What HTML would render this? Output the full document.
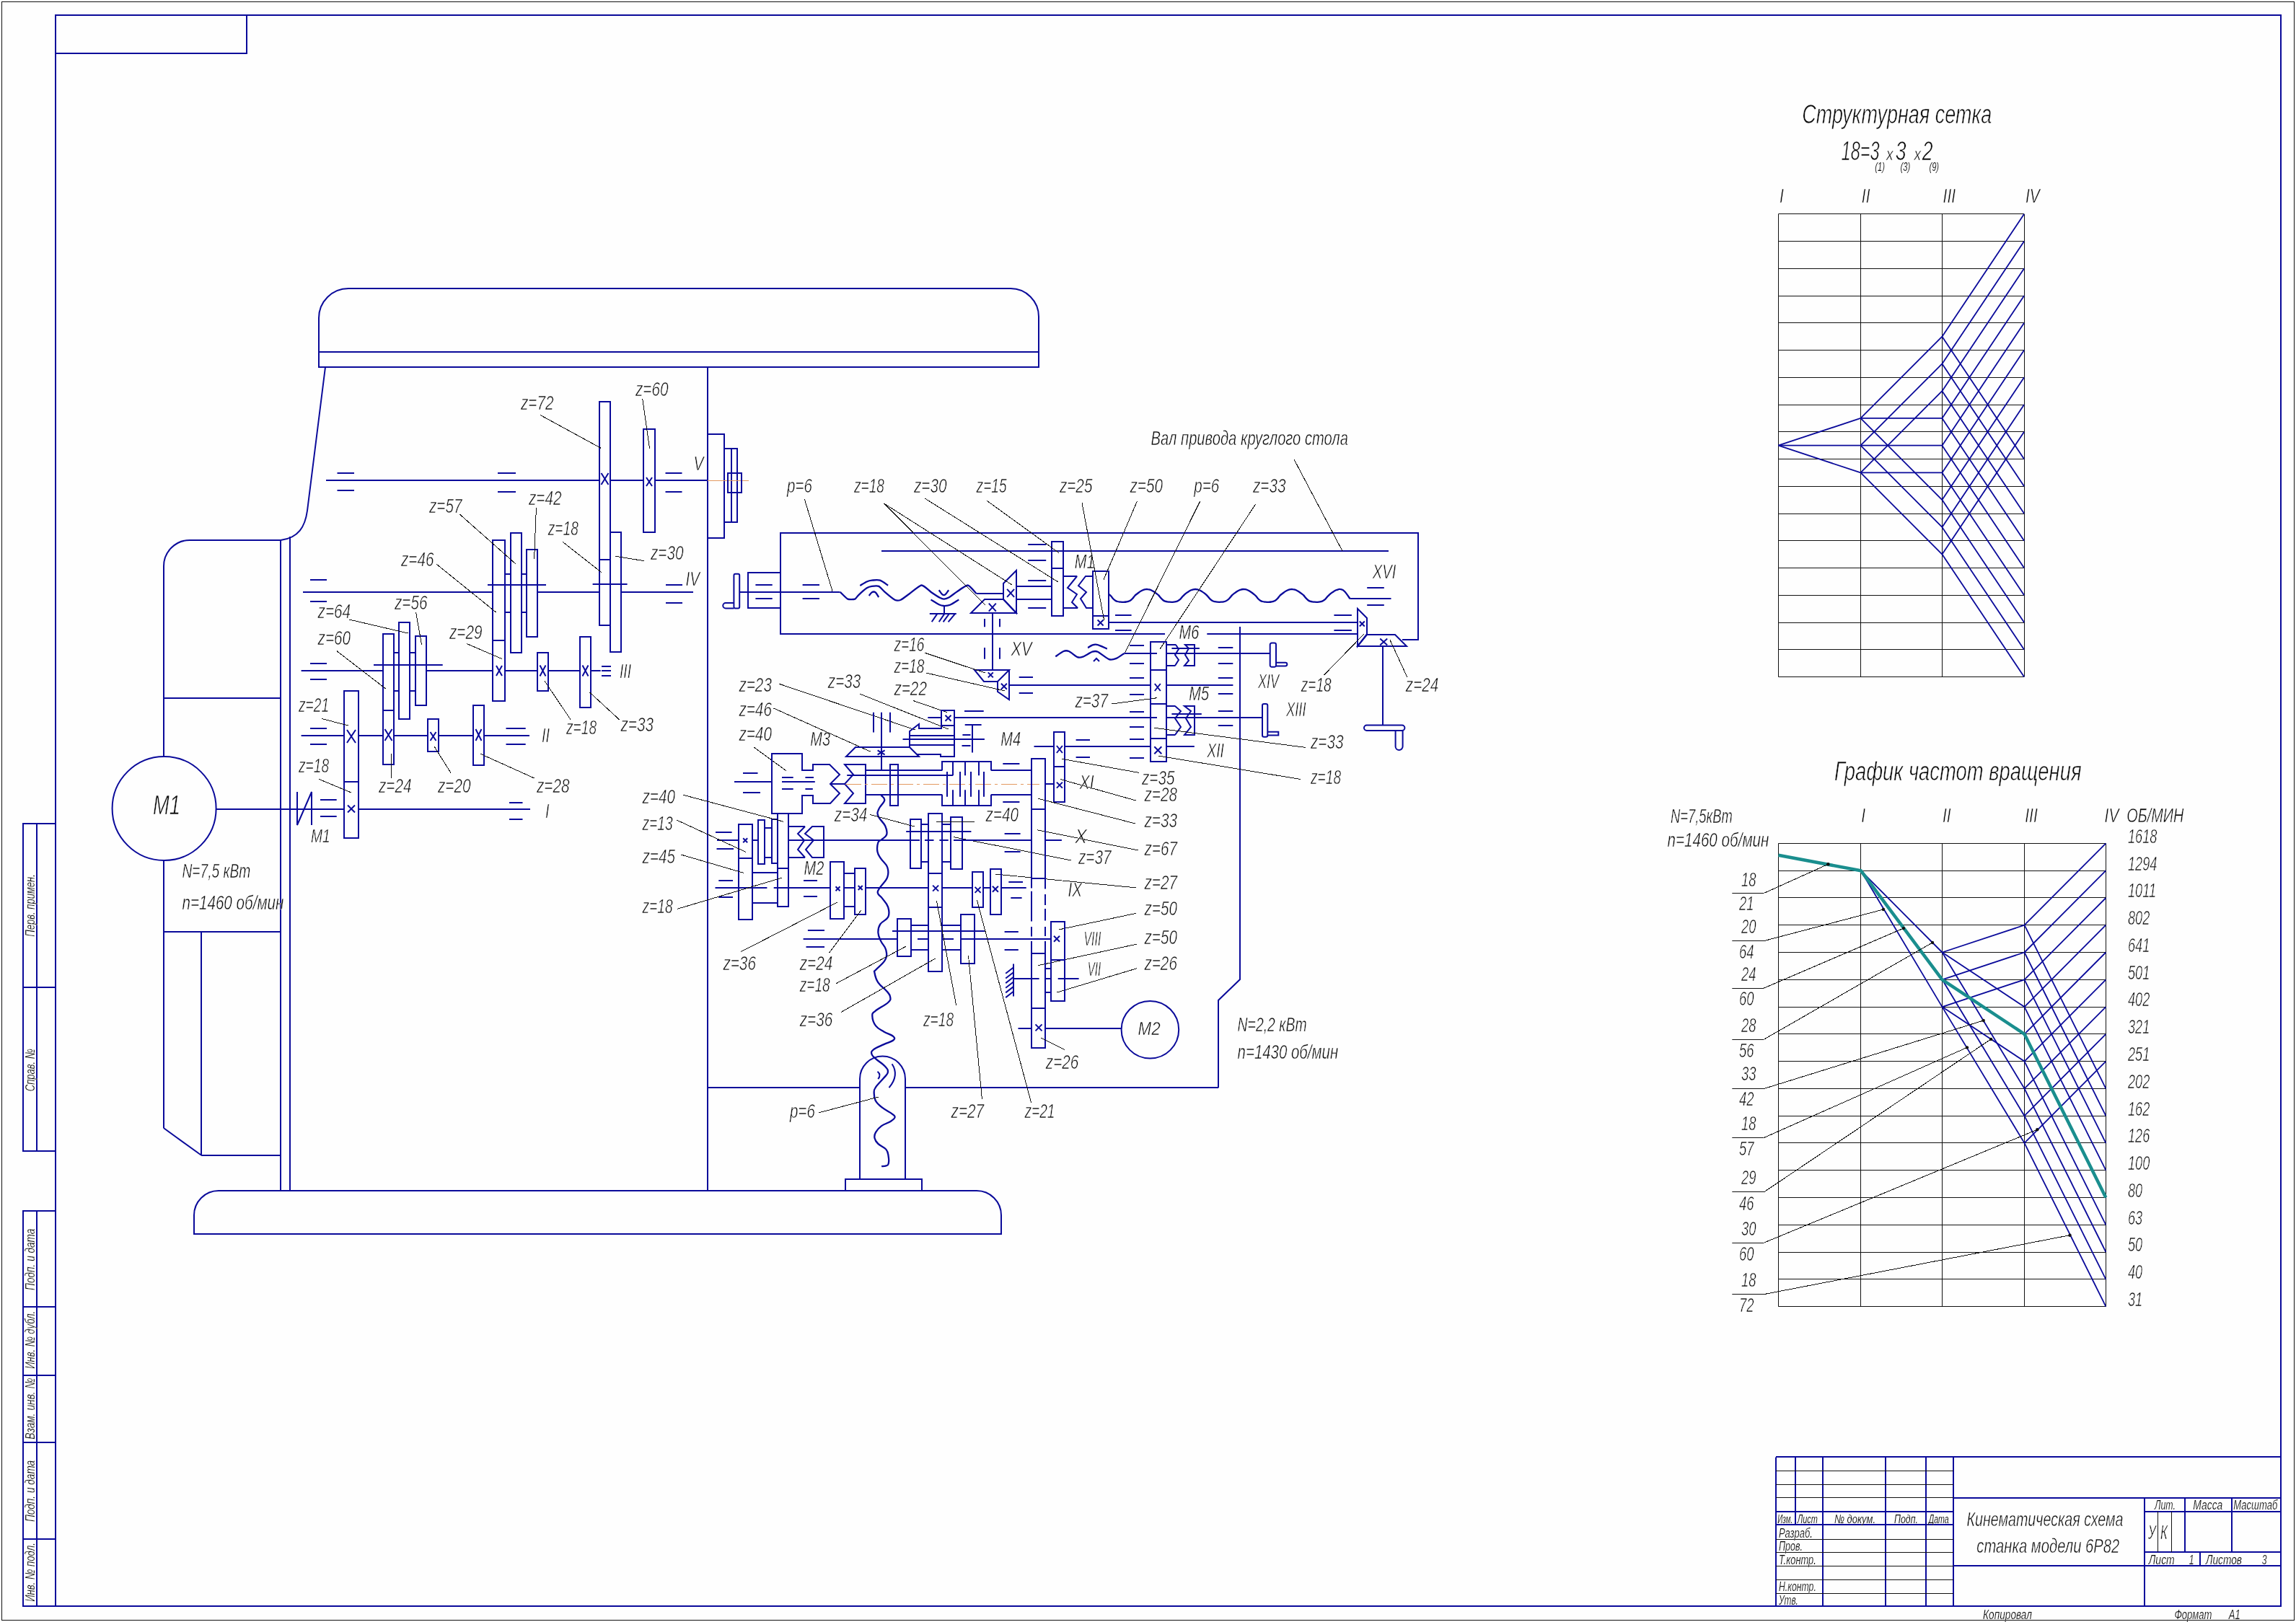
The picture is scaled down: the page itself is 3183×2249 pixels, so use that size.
<!DOCTYPE html>
<html lang="ru"><head><meta charset="utf-8"><title>Кинематическая схема станка модели 6Р82</title>
<style>
html,body{margin:0;padding:0;background:#fefefe;}
svg{display:block;will-change:transform;}
svg path,svg rect,svg circle{fill:none;stroke-linecap:butt;}
svg text{font-family:"Liberation Sans",sans-serif;font-style:italic;stroke:#fefefe;paint-order:fill stroke;}
</style></head><body>
<svg width="3183" height="2249" viewBox="0 0 3183 2249">
<rect x="0" y="0" width="3183" height="2249" style="fill:#fefefe;stroke:none"/>
<rect x="2.5" y="2.5" width="3178" height="2244" stroke="#111" stroke-width="1"/>
<rect x="77" y="21" width="3085" height="2206" stroke="#0a0a9a" stroke-width="2"/>
<rect x="77" y="21" width="265" height="53" stroke="#0a0a9a" stroke-width="2"/>
<path d="M77 1142L32 1142L32 1596L77 1596" stroke="#0a0a9a" stroke-width="2"/>
<path d="M51 1142.5L51 1596.5" stroke="#0a0a9a" stroke-width="2"/>
<path d="M32 1369L77 1369" stroke="#0a0a9a" stroke-width="2"/>
<path d="M77 1679L32 1679L32 2227L77 2227" stroke="#0a0a9a" stroke-width="2"/>
<path d="M51 1679.2L51 2227" stroke="#0a0a9a" stroke-width="2"/>
<path d="M32 1812L77 1812" stroke="#0a0a9a" stroke-width="2"/>
<path d="M32 1907L77 1907" stroke="#0a0a9a" stroke-width="2"/>
<path d="M32 2000L77 2000" stroke="#0a0a9a" stroke-width="2"/>
<path d="M32 2134L77 2134" stroke="#0a0a9a" stroke-width="2"/>
<text transform="translate(48 1298.7) rotate(-90) scale(0.66 1)" font-size="19" textLength="131.1" lengthAdjust="spacingAndGlyphs" fill="#0c0c0c" stroke-width="0.2">Перв. примен.</text>
<text transform="translate(48 1513.2) rotate(-90) scale(0.66 1)" font-size="19" textLength="89.4" lengthAdjust="spacingAndGlyphs" fill="#0c0c0c" stroke-width="0.2">Справ. №</text>
<text transform="translate(48 1788.9) rotate(-90) scale(0.66 1)" font-size="19" textLength="129.2" lengthAdjust="spacingAndGlyphs" fill="#0c0c0c" stroke-width="0.2">Подп. и дата</text>
<text transform="translate(48 1897.7) rotate(-90) scale(0.66 1)" font-size="19" textLength="120.9" lengthAdjust="spacingAndGlyphs" fill="#0c0c0c" stroke-width="0.2">Инв. № дубл.</text>
<text transform="translate(48 1995.8) rotate(-90) scale(0.66 1)" font-size="19" textLength="129.2" lengthAdjust="spacingAndGlyphs" fill="#0c0c0c" stroke-width="0.2">Взам. инв. №</text>
<text transform="translate(48 2110.1) rotate(-90) scale(0.66 1)" font-size="19" textLength="129.2" lengthAdjust="spacingAndGlyphs" fill="#0c0c0c" stroke-width="0.2">Подп. и дата</text>
<text transform="translate(48 2220.8) rotate(-90) scale(0.66 1)" font-size="19" textLength="123.8" lengthAdjust="spacingAndGlyphs" fill="#0c0c0c" stroke-width="0.2">Инв. № подл.</text>
<path d="M2462 2020L3162 2020" stroke="#0a0a9a" stroke-width="2"/>
<path d="M2462 2020.5L2462 2227" stroke="#0a0a9a" stroke-width="2"/>
<path d="M2527 2020.5L2527 2227" stroke="#0a0a9a" stroke-width="2"/>
<path d="M2614 2020.5L2614 2227" stroke="#0a0a9a" stroke-width="2"/>
<path d="M2670 2020.5L2670 2227" stroke="#0a0a9a" stroke-width="2"/>
<path d="M2708 2020.5L2708 2227" stroke="#0a0a9a" stroke-width="2"/>
<path d="M2489 2020.5L2489 2114.5" stroke="#0a0a9a" stroke-width="2"/>
<path d="M2462 2039.5L2708 2039.5" stroke="#111" stroke-width="1"/>
<path d="M2462 2058.5L2708 2058.5" stroke="#111" stroke-width="1"/>
<path d="M2462 2076.5L2708 2076.5" stroke="#111" stroke-width="1"/>
<path d="M2462 2134.5L2708 2134.5" stroke="#111" stroke-width="1"/>
<path d="M2462 2152.5L2708 2152.5" stroke="#111" stroke-width="1"/>
<path d="M2462 2171.5L2708 2171.5" stroke="#111" stroke-width="1"/>
<path d="M2462 2190.5L2708 2190.5" stroke="#111" stroke-width="1"/>
<path d="M2462 2209.5L2708 2209.5" stroke="#111" stroke-width="1"/>
<path d="M2462 2096L2708 2096" stroke="#0a0a9a" stroke-width="2"/>
<path d="M2462 2114L2708 2114" stroke="#0a0a9a" stroke-width="2"/>
<path d="M2708 2077L3162 2077" stroke="#0a0a9a" stroke-width="2"/>
<path d="M2708 2171L3162 2171" stroke="#0a0a9a" stroke-width="2"/>
<path d="M2973 2076.9L2973 2227" stroke="#0a0a9a" stroke-width="2"/>
<path d="M2973 2096L3162 2096" stroke="#0a0a9a" stroke-width="2"/>
<path d="M2973 2152L3162 2152" stroke="#0a0a9a" stroke-width="2"/>
<path d="M3029 2076.9L3029 2152.1" stroke="#0a0a9a" stroke-width="2"/>
<path d="M3094 2076.9L3094 2152.1" stroke="#0a0a9a" stroke-width="2"/>
<path d="M2991.5 2095.7L2991.5 2152.1" stroke="#111" stroke-width="1"/>
<path d="M3010.5 2095.7L3010.5 2152.1" stroke="#111" stroke-width="1"/>
<path d="M3050 2152.1L3050 2170.9" stroke="#0a0a9a" stroke-width="2"/>
<text transform="translate(2726.4 2116) scale(0.72 1)" font-size="27" textLength="301.4" lengthAdjust="spacingAndGlyphs" fill="#0c0c0c" stroke-width="0.5">Кинематическая схема</text>
<text transform="translate(2740.3 2153.3) scale(0.72 1)" font-size="27" textLength="275" lengthAdjust="spacingAndGlyphs" fill="#0c0c0c" stroke-width="0.5">станка модели 6Р82</text>
<text transform="translate(2464.3 2111.8) scale(0.62 1)" font-size="17" textLength="33.9" lengthAdjust="spacingAndGlyphs" fill="#0c0c0c" stroke-width="0.1">Изм.</text>
<text transform="translate(2491.8 2111.8) scale(0.62 1)" font-size="17" textLength="45.2" lengthAdjust="spacingAndGlyphs" fill="#0c0c0c" stroke-width="0.1">Лист</text>
<text transform="translate(2543 2111.8) scale(0.62 1)" font-size="17" textLength="91.9" lengthAdjust="spacingAndGlyphs" fill="#0c0c0c" stroke-width="0.1">№ докум.</text>
<text transform="translate(2626 2111.8) scale(0.62 1)" font-size="17" textLength="53.2" lengthAdjust="spacingAndGlyphs" fill="#0c0c0c" stroke-width="0.1">Подп.</text>
<text transform="translate(2673.7 2111.8) scale(0.62 1)" font-size="17" textLength="45.2" lengthAdjust="spacingAndGlyphs" fill="#0c0c0c" stroke-width="0.1">Дата</text>
<text transform="translate(2465.9 2131.6) scale(0.64 1)" font-size="19" textLength="73.4" lengthAdjust="spacingAndGlyphs" fill="#0c0c0c" stroke-width="0.2">Разраб.</text>
<text transform="translate(2465.9 2150) scale(0.64 1)" font-size="19" textLength="51.6" lengthAdjust="spacingAndGlyphs" fill="#0c0c0c" stroke-width="0.2">Пров.</text>
<text transform="translate(2465.9 2168.8) scale(0.64 1)" font-size="19" textLength="81.2" lengthAdjust="spacingAndGlyphs" fill="#0c0c0c" stroke-width="0.2">Т.контр.</text>
<text transform="translate(2465.9 2206) scale(0.64 1)" font-size="19" textLength="81.2" lengthAdjust="spacingAndGlyphs" fill="#0c0c0c" stroke-width="0.2">Н.контр.</text>
<text transform="translate(2465.9 2224.5) scale(0.64 1)" font-size="19" textLength="42.2" lengthAdjust="spacingAndGlyphs" fill="#0c0c0c" stroke-width="0.2">Утв.</text>
<text transform="translate(2987 2093.4) scale(0.64 1)" font-size="19" textLength="45.3" lengthAdjust="spacingAndGlyphs" fill="#0c0c0c" stroke-width="0.2">Лит.</text>
<text transform="translate(3040.3 2093.4) scale(0.64 1)" font-size="19" textLength="64.1" lengthAdjust="spacingAndGlyphs" fill="#0c0c0c" stroke-width="0.2">Масса</text>
<text transform="translate(3096.3 2093.4) scale(0.64 1)" font-size="19" textLength="95.3" lengthAdjust="spacingAndGlyphs" fill="#0c0c0c" stroke-width="0.2">Масштаб</text>
<text transform="translate(2977.9 2133.9) scale(0.6 1)" font-size="28" fill="#0c0c0c" stroke-width="0.6">У</text>
<text transform="translate(2995 2133.9) scale(0.6 1)" font-size="28" fill="#0c0c0c" stroke-width="0.6">К</text>
<text transform="translate(2978.8 2168.8) scale(0.64 1)" font-size="19" textLength="56.2" lengthAdjust="spacingAndGlyphs" fill="#0c0c0c" stroke-width="0.2">Лист</text>
<text transform="translate(3034.8 2168.8) scale(0.64 1)" font-size="19" fill="#0c0c0c" stroke-width="0.2">1</text>
<text transform="translate(3058 2168.8) scale(0.64 1)" font-size="19" textLength="78.1" lengthAdjust="spacingAndGlyphs" fill="#0c0c0c" stroke-width="0.2">Листов</text>
<text transform="translate(3135.8 2168.8) scale(0.64 1)" font-size="19" fill="#0c0c0c" stroke-width="0.2">3</text>
<text transform="translate(2749 2244.5) scale(0.64 1)" font-size="19" textLength="106.2" lengthAdjust="spacingAndGlyphs" fill="#0c0c0c" stroke-width="0.2">Копировал</text>
<text transform="translate(3014.4 2244.5) scale(0.64 1)" font-size="19" textLength="81.2" lengthAdjust="spacingAndGlyphs" fill="#0c0c0c" stroke-width="0.2">Формат</text>
<text transform="translate(3089.8 2244.5) scale(0.64 1)" font-size="19" textLength="25" lengthAdjust="spacingAndGlyphs" fill="#0c0c0c" stroke-width="0.2">А1</text>
<path d="M442 509L442 441A41 41 0 0 1 483 400L1401 400A39 39 0 0 1 1440 439L1440 509Z" stroke="#0a0a9a" stroke-width="2"/>
<path d="M442 488L1440 488" stroke="#0a0a9a" stroke-width="2"/>
<path d="M451 509L426 708C423 730 414 746 389 749" stroke="#0a0a9a" stroke-width="2"/>
<path d="M389 749L263 749A36 36 0 0 0 227 785L227 1050" stroke="#0a0a9a" stroke-width="2"/>
<path d="M227 968L389 968" stroke="#0a0a9a" stroke-width="2"/>
<path d="M389 749.4L389 1650.7" stroke="#0a0a9a" stroke-width="2"/>
<path d="M402 744L402 1650.7" stroke="#0a0a9a" stroke-width="2"/>
<path d="M227 1192L227 1564" stroke="#0a0a9a" stroke-width="2"/>
<path d="M226.8 1292L389 1292" stroke="#0a0a9a" stroke-width="2"/>
<path d="M279 1292.2L279 1601.8" stroke="#0a0a9a" stroke-width="2"/>
<path d="M226.8 1564L279 1601.8" stroke="#0a0a9a" stroke-width="2"/>
<path d="M279 1602L389 1602" stroke="#0a0a9a" stroke-width="2"/>
<circle cx="227.6" cy="1121" r="72" stroke="#0a0a9a" stroke-width="2"/>
<text transform="translate(212 1128.6) scale(0.74 1)" font-size="37" fill="#0c0c0c" stroke-width="0.7">М1</text>
<text transform="translate(252.4 1217) scale(0.72 1)" font-size="27" textLength="131.9" lengthAdjust="spacingAndGlyphs" fill="#0c0c0c" stroke-width="0.5">N=7,5 кВт</text>
<text transform="translate(252.4 1260.8) scale(0.72 1)" font-size="27" textLength="195.8" lengthAdjust="spacingAndGlyphs" fill="#0c0c0c" stroke-width="0.5">n=1460 об/мин</text>
<path d="M981 509L981 1650.7" stroke="#0a0a9a" stroke-width="2"/>
<path d="M269 1711L269 1685A34 34 0 0 1 303 1651L1354 1651A34 34 0 0 1 1388 1685L1388 1711Z" stroke="#0a0a9a" stroke-width="2"/>
<path d="M981 1508L1192 1508" stroke="#0a0a9a" stroke-width="2"/>
<path d="M1255 1508L1689.3 1508" stroke="#0a0a9a" stroke-width="2"/>
<path d="M1689 1508L1689 1387L1719 1358L1719 869" stroke="#0a0a9a" stroke-width="2"/>
<path d="M1192 1635L1192 1496A31.5 31.5 0 0 1 1255 1496L1255 1635" stroke="#0a0a9a" stroke-width="2"/>
<rect x="1172" y="1635" width="106" height="16" stroke="#0a0a9a" stroke-width="2"/>
<rect x="981" y="602" width="23" height="144" stroke="#0a0a9a" stroke-width="2"/>
<rect x="1004" y="622" width="18" height="102" stroke="#0a0a9a" stroke-width="2"/>
<path d="M1014 622L1014 724" stroke="#0a0a9a" stroke-width="2"/>
<path d="M981 666.5L1038 666.5" stroke="#e39a60" stroke-width="1"/>
<rect x="1009" y="656" width="19" height="27" stroke="#0a0a9a" stroke-width="2"/>
<path d="M452 666L831 666" stroke="#0a0a9a" stroke-width="2"/>
<path d="M846 666L892 666" stroke="#0a0a9a" stroke-width="2"/>
<path d="M908 666L981 666" stroke="#0a0a9a" stroke-width="2"/>
<path d="M467.5 656L491 656" stroke="#0a0a9a" stroke-width="2"/>
<path d="M467.5 680L491 680" stroke="#0a0a9a" stroke-width="2"/>
<path d="M690 656L715 656" stroke="#0a0a9a" stroke-width="2"/>
<path d="M690 682L715 682" stroke="#0a0a9a" stroke-width="2"/>
<path d="M922.5 656L945.5 656" stroke="#0a0a9a" stroke-width="2"/>
<path d="M922.5 682L945.5 682" stroke="#0a0a9a" stroke-width="2"/>
<rect x="831" y="557" width="15" height="310" stroke="#0a0a9a" stroke-width="2"/>
<path d="M831 776L846 776" stroke="#0a0a9a" stroke-width="2"/>
<rect x="892" y="595" width="16" height="143" stroke="#0a0a9a" stroke-width="2"/>
<rect x="846" y="738" width="15" height="166" stroke="#0a0a9a" stroke-width="2"/>
<path d="M821.6 810L869.6 810" stroke="#0a0a9a" stroke-width="2"/>
<path d="M833.5 656L843.5 672M843.5 656L833.5 672" stroke="#0a0a9a" stroke-width="2"/>
<path d="M896 662L904 674M904 662L896 674" stroke="#0a0a9a" stroke-width="2"/>
<text transform="translate(961.6 652.4) scale(0.76 1)" font-size="28" textLength="18.4" lengthAdjust="spacingAndGlyphs" fill="#0c0c0c" stroke-width="0.6">V</text>
<path d="M420 821L683 821" stroke="#0a0a9a" stroke-width="2"/>
<path d="M745 821L831 821" stroke="#0a0a9a" stroke-width="2"/>
<path d="M861.3 821L961 821" stroke="#0a0a9a" stroke-width="2"/>
<path d="M430 804L453 804" stroke="#0a0a9a" stroke-width="2"/>
<path d="M430 834L453 834" stroke="#0a0a9a" stroke-width="2"/>
<path d="M923 811L946 811" stroke="#0a0a9a" stroke-width="2"/>
<path d="M923 836L946 836" stroke="#0a0a9a" stroke-width="2"/>
<text transform="translate(950.6 812.3) scale(0.76 1)" font-size="28" textLength="25.7" lengthAdjust="spacingAndGlyphs" fill="#0c0c0c" stroke-width="0.6">IV</text>
<rect x="683" y="749" width="17" height="223" stroke="#0a0a9a" stroke-width="2"/>
<path d="M683 888L700 888" stroke="#0a0a9a" stroke-width="2"/>
<rect x="708" y="739" width="15" height="166" stroke="#0a0a9a" stroke-width="2"/>
<rect x="730" y="762" width="15" height="121" stroke="#0a0a9a" stroke-width="2"/>
<path d="M700 796L708 796" stroke="#0a0a9a" stroke-width="2"/>
<path d="M723 796L730 796" stroke="#0a0a9a" stroke-width="2"/>
<path d="M700 849L708 849" stroke="#0a0a9a" stroke-width="2"/>
<path d="M723 849L730 849" stroke="#0a0a9a" stroke-width="2"/>
<path d="M676 811L757 811" stroke="#0a0a9a" stroke-width="2"/>
<path d="M417.6 930L530.8 930" stroke="#0a0a9a" stroke-width="2"/>
<path d="M591.3 930L683 930" stroke="#0a0a9a" stroke-width="2"/>
<path d="M700 930L744.8 930" stroke="#0a0a9a" stroke-width="2"/>
<path d="M760 930L803.9 930" stroke="#0a0a9a" stroke-width="2"/>
<path d="M818.9 930L832.7 930" stroke="#0a0a9a" stroke-width="2"/>
<path d="M430 920L453 920" stroke="#0a0a9a" stroke-width="2"/>
<path d="M430 942L453 942" stroke="#0a0a9a" stroke-width="2"/>
<path d="M834 924L847 924" stroke="#0a0a9a" stroke-width="2"/>
<path d="M834 930L847 930" stroke="#0a0a9a" stroke-width="2"/>
<path d="M834 937L847 937" stroke="#0a0a9a" stroke-width="2"/>
<text transform="translate(859 940) scale(0.76 1)" font-size="28" textLength="21.1" lengthAdjust="spacingAndGlyphs" fill="#0c0c0c" stroke-width="0.6">III</text>
<rect x="531" y="879" width="15" height="181" stroke="#0a0a9a" stroke-width="2"/>
<path d="M530.8 985L546.3 985" stroke="#0a0a9a" stroke-width="2"/>
<rect x="553" y="863" width="15" height="134" stroke="#0a0a9a" stroke-width="2"/>
<rect x="576" y="882" width="15" height="96" stroke="#0a0a9a" stroke-width="2"/>
<path d="M546.3 905L552.7 905" stroke="#0a0a9a" stroke-width="2"/>
<path d="M568.2 905L576 905" stroke="#0a0a9a" stroke-width="2"/>
<path d="M546.3 958L552.7 958" stroke="#0a0a9a" stroke-width="2"/>
<path d="M568.2 958L576 958" stroke="#0a0a9a" stroke-width="2"/>
<path d="M518 922L613.7 922" stroke="#0a0a9a" stroke-width="2"/>
<rect x="745" y="905" width="15" height="53" stroke="#0a0a9a" stroke-width="2"/>
<rect x="804" y="883" width="15" height="98" stroke="#0a0a9a" stroke-width="2"/>
<path d="M688 923L696 937M696 923L688 937" stroke="#0a0a9a" stroke-width="2"/>
<path d="M748.5 922.5L756.5 937.5M756.5 922.5L748.5 937.5" stroke="#0a0a9a" stroke-width="2"/>
<path d="M807.5 922.5L815.5 937.5M815.5 922.5L807.5 937.5" stroke="#0a0a9a" stroke-width="2"/>
<path d="M417.6 1020L476.7 1020" stroke="#0a0a9a" stroke-width="2"/>
<path d="M497.2 1020L530.8 1020" stroke="#0a0a9a" stroke-width="2"/>
<path d="M546.3 1020L593 1020" stroke="#0a0a9a" stroke-width="2"/>
<path d="M608 1020L656 1020" stroke="#0a0a9a" stroke-width="2"/>
<path d="M671.4 1020L734 1020" stroke="#0a0a9a" stroke-width="2"/>
<path d="M430 1010L453 1010" stroke="#0a0a9a" stroke-width="2"/>
<path d="M430 1032L453 1032" stroke="#0a0a9a" stroke-width="2"/>
<path d="M701.5 1010L728.7 1010" stroke="#0a0a9a" stroke-width="2"/>
<path d="M701.5 1032L728.7 1032" stroke="#0a0a9a" stroke-width="2"/>
<text transform="translate(751 1028.7) scale(0.76 1)" font-size="28" textLength="14.5" lengthAdjust="spacingAndGlyphs" fill="#0c0c0c" stroke-width="0.6">II</text>
<rect x="477" y="958" width="20" height="204" stroke="#0a0a9a" stroke-width="2"/>
<path d="M476.7 1084L497.2 1084" stroke="#0a0a9a" stroke-width="2"/>
<rect x="593" y="997" width="15" height="45" stroke="#0a0a9a" stroke-width="2"/>
<rect x="656" y="978" width="15" height="83" stroke="#0a0a9a" stroke-width="2"/>
<path d="M481 1012L493 1030M493 1012L481 1030" stroke="#0a0a9a" stroke-width="2"/>
<path d="M533.5 1011L543.5 1027M543.5 1011L533.5 1027" stroke="#0a0a9a" stroke-width="2"/>
<path d="M596.5 1015L604.5 1027M604.5 1015L596.5 1027" stroke="#0a0a9a" stroke-width="2"/>
<path d="M659.5 1011L667.5 1027M667.5 1011L659.5 1027" stroke="#0a0a9a" stroke-width="2"/>
<path d="M299.6 1122L476.7 1122" stroke="#0a0a9a" stroke-width="2"/>
<path d="M497.2 1122L735 1122" stroke="#0a0a9a" stroke-width="2"/>
<path d="M412 1098L412 1144L432 1098L432 1144" stroke="#0a0a9a" stroke-width="2"/>
<path d="M444 1109L466.7 1109" stroke="#0a0a9a" stroke-width="2"/>
<path d="M444 1132L466.7 1132" stroke="#0a0a9a" stroke-width="2"/>
<path d="M706 1113L724.5 1113" stroke="#0a0a9a" stroke-width="2"/>
<path d="M706 1136L724.5 1136" stroke="#0a0a9a" stroke-width="2"/>
<path d="M482 1116.5L492 1126.5M492 1116.5L482 1126.5" stroke="#0a0a9a" stroke-width="2"/>
<text transform="translate(756 1134) scale(0.76 1)" font-size="28" textLength="7.2" lengthAdjust="spacingAndGlyphs" fill="#0c0c0c" stroke-width="0.6">I</text>
<text transform="translate(431 1167.6) scale(0.74 1)" font-size="26" fill="#0c0c0c" stroke-width="0.5">М1</text>
<text transform="translate(722 568) scale(0.74 1)" font-size="28" textLength="61.5" lengthAdjust="spacingAndGlyphs" fill="#0c0c0c" stroke-width="0.6">z=72</text>
<path d="M749 575.5L833 621.3" stroke="#111" stroke-width="1" shape-rendering="crispEdges"/>
<text transform="translate(881 549) scale(0.74 1)" font-size="28" textLength="61.5" lengthAdjust="spacingAndGlyphs" fill="#0c0c0c" stroke-width="0.6">z=60</text>
<path d="M890.8 553.3L900.6 621.8" stroke="#111" stroke-width="1" shape-rendering="crispEdges"/>
<text transform="translate(733 700) scale(0.74 1)" font-size="28" textLength="61.5" lengthAdjust="spacingAndGlyphs" fill="#0c0c0c" stroke-width="0.6">z=42</text>
<path d="M743.4 704L740.6 775.5" stroke="#111" stroke-width="1" shape-rendering="crispEdges"/>
<text transform="translate(595 711) scale(0.74 1)" font-size="28" textLength="61.5" lengthAdjust="spacingAndGlyphs" fill="#0c0c0c" stroke-width="0.6">z=57</text>
<path d="M636.7 712.5L714.8 781.8" stroke="#111" stroke-width="1" shape-rendering="crispEdges"/>
<text transform="translate(759.8 741.6) scale(0.74 1)" font-size="28" textLength="56.8" lengthAdjust="spacingAndGlyphs" fill="#0c0c0c" stroke-width="0.6">z=18</text>
<path d="M780 751.3L834 793.8" stroke="#111" stroke-width="1" shape-rendering="crispEdges"/>
<text transform="translate(902 775.5) scale(0.74 1)" font-size="28" textLength="61.5" lengthAdjust="spacingAndGlyphs" fill="#0c0c0c" stroke-width="0.6">z=30</text>
<path d="M853.5 771.3L893 777.7" stroke="#111" stroke-width="1" shape-rendering="crispEdges"/>
<text transform="translate(556 785.4) scale(0.74 1)" font-size="28" textLength="61.5" lengthAdjust="spacingAndGlyphs" fill="#0c0c0c" stroke-width="0.6">z=46</text>
<path d="M605.4 782.4L687.7 849" stroke="#111" stroke-width="1" shape-rendering="crispEdges"/>
<text transform="translate(547 845) scale(0.74 1)" font-size="28" textLength="61.5" lengthAdjust="spacingAndGlyphs" fill="#0c0c0c" stroke-width="0.6">z=56</text>
<path d="M576.6 849L584.6 894" stroke="#111" stroke-width="1" shape-rendering="crispEdges"/>
<text transform="translate(440.6 856.7) scale(0.74 1)" font-size="28" textLength="61.5" lengthAdjust="spacingAndGlyphs" fill="#0c0c0c" stroke-width="0.6">z=64</text>
<path d="M484 859L565.5 878" stroke="#111" stroke-width="1" shape-rendering="crispEdges"/>
<text transform="translate(440.6 894) scale(0.74 1)" font-size="28" textLength="61.5" lengthAdjust="spacingAndGlyphs" fill="#0c0c0c" stroke-width="0.6">z=60</text>
<path d="M466.7 902.5L534.7 955" stroke="#111" stroke-width="1" shape-rendering="crispEdges"/>
<text transform="translate(623 886.4) scale(0.74 1)" font-size="28" textLength="61.5" lengthAdjust="spacingAndGlyphs" fill="#0c0c0c" stroke-width="0.6">z=29</text>
<path d="M647 892.5L696 913.6" stroke="#111" stroke-width="1" shape-rendering="crispEdges"/>
<text transform="translate(414 987) scale(0.74 1)" font-size="28" textLength="56.8" lengthAdjust="spacingAndGlyphs" fill="#0c0c0c" stroke-width="0.6">z=21</text>
<path d="M446 996.5L482.8 1006" stroke="#111" stroke-width="1" shape-rendering="crispEdges"/>
<text transform="translate(414 1071) scale(0.74 1)" font-size="28" textLength="56.8" lengthAdjust="spacingAndGlyphs" fill="#0c0c0c" stroke-width="0.6">z=18</text>
<path d="M442 1080.3L487 1099" stroke="#111" stroke-width="1" shape-rendering="crispEdges"/>
<text transform="translate(525 1098.6) scale(0.74 1)" font-size="28" textLength="61.5" lengthAdjust="spacingAndGlyphs" fill="#0c0c0c" stroke-width="0.6">z=24</text>
<path d="M542.5 1045.4L542.5 1078.6" stroke="#111" stroke-width="1" shape-rendering="crispEdges"/>
<text transform="translate(607 1098.6) scale(0.74 1)" font-size="28" textLength="61.5" lengthAdjust="spacingAndGlyphs" fill="#0c0c0c" stroke-width="0.6">z=20</text>
<path d="M602 1035L625.5 1072.5" stroke="#111" stroke-width="1" shape-rendering="crispEdges"/>
<text transform="translate(744 1098.6) scale(0.74 1)" font-size="28" textLength="61.5" lengthAdjust="spacingAndGlyphs" fill="#0c0c0c" stroke-width="0.6">z=28</text>
<path d="M666.3 1045.4L741.2 1079.2" stroke="#111" stroke-width="1" shape-rendering="crispEdges"/>
<text transform="translate(785 1017.6) scale(0.74 1)" font-size="28" textLength="56.8" lengthAdjust="spacingAndGlyphs" fill="#0c0c0c" stroke-width="0.6">z=18</text>
<path d="M754.5 943.6L791 997.6" stroke="#111" stroke-width="1" shape-rendering="crispEdges"/>
<text transform="translate(860.5 1014.3) scale(0.74 1)" font-size="28" textLength="61.5" lengthAdjust="spacingAndGlyphs" fill="#0c0c0c" stroke-width="0.6">z=33</text>
<path d="M817.5 960L859 998.2" stroke="#111" stroke-width="1" shape-rendering="crispEdges"/>
<path d="M1615 879L1082 879L1082 739L1966 739L1966 887L1944 887" stroke="#0a0a9a" stroke-width="2"/>
<path d="M1673.3 879L1881.9 879" stroke="#0a0a9a" stroke-width="2"/>
<path d="M1222 764L1925 764" stroke="#0a0a9a" stroke-width="2"/>
<path d="M1082 794L1037 794L1037 843L1082 843" stroke="#0a0a9a" stroke-width="2"/>
<path d="M1025.8 821L1164.5 821" stroke="#0a0a9a" stroke-width="2"/>
<path d="M1047.4 811L1070.7 811" stroke="#0a0a9a" stroke-width="2"/>
<path d="M1047.4 830L1070.7 830" stroke="#0a0a9a" stroke-width="2"/>
<path d="M1112.6 811L1136 811" stroke="#0a0a9a" stroke-width="2"/>
<path d="M1112.6 830L1136 830" stroke="#0a0a9a" stroke-width="2"/>
<path d="M1019.4 795.8h3.8a2 2 0 0 1 2 2v43.7a2 2 0 0 1 -2 2h-3.8a2 2 0 0 1 -2 -2v-43.7a2 2 0 0 1 2 -2z" stroke="#0a0a9a" stroke-width="2"/>
<path d="M1017.4 836H1006a3.7 3.7 0 0 0 0 7.5h11.4" stroke="#0a0a9a" stroke-width="2"/>
<path d="M1164.7 820.8C1165.8 821.8 1173.2 829.6 1175.3 830.6C1177.4 831.6 1183.8 831.1 1185.3 830.6C1186.8 830.1 1188.4 826.8 1190 825.3C1191.6 823.8 1199.8 816.5 1201.7 815.3C1203.6 814.1 1207.1 813.1 1208.8 812.9C1210.5 812.7 1216.4 812.1 1218.2 812.9C1220 813.7 1224.2 818.7 1226.4 820.6C1228.6 822.5 1238.3 830.6 1240.5 831.7C1242.7 832.8 1246.8 832.5 1248.8 831.7C1250.8 830.9 1257.6 825.5 1260.5 823.5C1263.4 821.5 1274.5 811.7 1277.6 811.5C1280.7 811.3 1288.6 819.5 1291.1 821.2C1293.6 822.9 1301.1 827.9 1302.9 828.8C1304.7 829.7 1307.5 830.7 1308.8 830.6C1310.1 830.5 1314 829.2 1315.8 828.2C1317.6 827.2 1323.8 822.3 1326.4 820.6C1329 818.9 1339 811.3 1341.7 811.5C1344.4 811.7 1352.2 821.8 1353.4 822.9" stroke="#0a0a9a" stroke-width="2.3"/>
<path d="M1353.4 823L1391.1 823" stroke="#0a0a9a" stroke-width="2"/>
<path d="M1192.3 812C1193.9 811.1 1199 807.7 1201.7 806.5C1204.5 805.3 1205.8 805 1208.8 804.7C1211.8 804.4 1216.3 803.5 1220 804.7C1223.7 805.9 1229.2 810.6 1231.1 811.8" stroke="#0a0a9a" stroke-width="2.3"/>
<path d="M1204.7 826.1C1205.4 825.3 1207.3 822 1208.8 821.2C1210.3 820.4 1211.9 820.1 1213.5 821.2C1215.1 822.3 1217.4 826.9 1218.2 828" stroke="#0a0a9a" stroke-width="2.3"/>
<path d="M1301.7 818.2C1302.5 819.2 1304.9 823.4 1306.4 824.4C1307.9 825.4 1309 825.4 1310.5 824.4C1312 823.4 1314.4 819.2 1315.2 818.2" stroke="#0a0a9a" stroke-width="2.3"/>
<path d="M1290.5 831.5C1292.4 832.6 1298.8 836.8 1301.7 838.2C1304.7 839.6 1305.7 839.9 1308.2 840C1310.8 840.1 1313.5 840.2 1317 838.8C1320.5 837.4 1327.2 832.7 1329.3 831.5" stroke="#0a0a9a" stroke-width="2.3"/>
<path d="M1309 840L1309 850.6" stroke="#0a0a9a" stroke-width="2"/>
<path d="M1288.8 851L1325.8 851" stroke="#0a0a9a" stroke-width="2"/>
<path d="M1299.3 851.1L1291.7 862.3" stroke="#0a0a9a" stroke-width="2"/>
<path d="M1309.3 851.1L1301.7 862.3" stroke="#0a0a9a" stroke-width="2"/>
<path d="M1315.8 851.1L1307.6 862.3" stroke="#0a0a9a" stroke-width="2"/>
<path d="M1324 851.1L1314.6 862.3" stroke="#0a0a9a" stroke-width="2"/>
<path d="M1391 809L1409 791L1409 850L1391 831Z" stroke="#0a0a9a" stroke-width="2"/>
<path d="M1396.1 816.8L1406.1 827.8M1406.1 816.8L1396.1 827.8" stroke="#0a0a9a" stroke-width="2"/>
<path d="M1346 850L1365 831L1391 831L1409 850Z" stroke="#0a0a9a" stroke-width="2"/>
<path d="M1370.8 836.6L1380.8 847.6M1380.8 836.6L1370.8 847.6" stroke="#0a0a9a" stroke-width="2"/>
<path d="M1376 849.9L1376 929" stroke="#0a0a9a" stroke-width="2"/>
<path d="M1365 858L1365 869.3" stroke="#0a0a9a" stroke-width="2"/>
<path d="M1365 897.9L1365 913.7" stroke="#0a0a9a" stroke-width="2"/>
<path d="M1386 858L1386 869.3" stroke="#0a0a9a" stroke-width="2"/>
<path d="M1386 897.9L1386 913.7" stroke="#0a0a9a" stroke-width="2"/>
<text transform="translate(1401.6 909) scale(0.76 1)" font-size="28" textLength="38.2" lengthAdjust="spacingAndGlyphs" fill="#0c0c0c" stroke-width="0.6">XV</text>
<path d="M1351 929L1399 929L1383 945L1364 945Z" stroke="#0a0a9a" stroke-width="2"/>
<path d="M1369.8 932.4L1376.8 939.4M1376.8 932.4L1369.8 939.4" stroke="#0a0a9a" stroke-width="2"/>
<path d="M1399 929L1399 970L1383 959L1383 945" stroke="#0a0a9a" stroke-width="2"/>
<path d="M1387.9 947.7L1395.9 955.7M1395.9 947.7L1387.9 955.7" stroke="#0a0a9a" stroke-width="2"/>
<path d="M1409.3 813L1458.5 813" stroke="#0a0a9a" stroke-width="2"/>
<path d="M1409.3 831L1458.5 831" stroke="#0a0a9a" stroke-width="2"/>
<path d="M1425.2 755L1450.2 755" stroke="#0a0a9a" stroke-width="2"/>
<path d="M1425.2 777L1450.2 777" stroke="#0a0a9a" stroke-width="2"/>
<path d="M1425.2 805L1450.2 805" stroke="#0a0a9a" stroke-width="2"/>
<path d="M1425.2 843L1450.2 843" stroke="#0a0a9a" stroke-width="2"/>
<rect x="1458" y="751" width="16" height="103" stroke="#0a0a9a" stroke-width="2"/>
<path d="M1458.5 788L1474.4 788" stroke="#0a0a9a" stroke-width="2"/>
<path d="M1474.4 799L1493.3 799" stroke="#0a0a9a" stroke-width="2"/>
<path d="M1474.4 843L1494.2 843" stroke="#0a0a9a" stroke-width="2"/>
<path d="M1493 799L1480 815L1493 824L1486 835L1494 843" stroke="#0a0a9a" stroke-width="2"/>
<path d="M1515 799L1505 799L1495 812L1506 821L1498 830L1506 843L1515 843" stroke="#0a0a9a" stroke-width="2"/>
<text transform="translate(1489.8 787.5) scale(0.74 1)" font-size="27" fill="#0c0c0c" stroke-width="0.5">М1</text>
<rect x="1515" y="792" width="22" height="80" stroke="#0a0a9a" stroke-width="2"/>
<path d="M1515 854L1537.2 854" stroke="#0a0a9a" stroke-width="2"/>
<path d="M1521.6 859.5L1529.6 867.5M1529.6 859.5L1521.6 867.5" stroke="#0a0a9a" stroke-width="2"/>
<path d="M1537.2 863L1881.9 863" stroke="#0a0a9a" stroke-width="2"/>
<path d="M1546 853L1568.6 853" stroke="#0a0a9a" stroke-width="2"/>
<path d="M1546 874L1568.6 874" stroke="#0a0a9a" stroke-width="2"/>
<path d="M1849.4 853L1873.9 853" stroke="#0a0a9a" stroke-width="2"/>
<path d="M1849.4 874L1873.9 874" stroke="#0a0a9a" stroke-width="2"/>
<path d="M1537.2 823.8C1537.8 824.3 1539 825.2 1540.2 826.5C1541.4 827.8 1542 829 1543.2 830.3C1544.4 831.5 1545 832 1546.2 832.7C1547.4 833.5 1548 833.6 1549.2 834C1550.4 834.3 1551 834.4 1552.2 834.6C1553.4 834.7 1554 834.7 1555.2 834.8C1556.4 834.8 1557 834.8 1558.2 834.8C1559.4 834.7 1560 834.7 1561.2 834.5C1562.4 834.3 1563 834.3 1564.2 833.9C1565.4 833.5 1566 833.3 1567.2 832.5C1568.4 831.7 1569 831.1 1570.2 829.8C1571.4 828.5 1572 827.2 1573.2 826C1574.4 824.7 1575 824.4 1576.2 823.5C1577.4 822.5 1578 822 1579.2 821.2C1580.4 820.3 1581 819.9 1582.2 819.3C1583.4 818.6 1584 818.3 1585.2 817.9C1586.4 817.5 1587 817.3 1588.2 817.1C1589.4 817 1590 816.9 1591.2 817.1C1592.4 817.2 1593 817.3 1594.2 817.7C1595.4 818.1 1596 818.3 1597.2 819C1598.4 819.6 1599 820 1600.2 820.8C1601.4 821.6 1602 822.1 1603.2 823C1604.4 823.9 1605 824.2 1606.2 825.4C1607.4 826.7 1608 827.8 1609.2 829.1C1610.4 830.5 1611 831.1 1612.2 832C1613.4 833 1614 833.2 1615.2 833.7C1616.4 834.1 1617 834.2 1618.2 834.4C1619.4 834.6 1620 834.7 1621.2 834.7C1622.4 834.8 1623 834.8 1624.2 834.8C1625.4 834.8 1626 834.8 1627.2 834.6C1628.4 834.5 1629 834.5 1630.2 834.1C1631.4 833.8 1632 833.7 1633.2 833C1634.4 832.4 1635 832 1636.2 830.9C1637.4 829.7 1638 828.7 1639.2 827.3C1640.4 826 1641 825.4 1642.2 824.3C1643.4 823.2 1644 822.8 1645.2 821.9C1646.4 821 1647 820.6 1648.2 819.9C1649.4 819.1 1650 818.8 1651.2 818.3C1652.4 817.8 1653 817.6 1654.2 817.3C1655.4 817 1656 817 1657.2 817C1658.4 817 1659 817.1 1660.2 817.4C1661.4 817.7 1662 817.9 1663.2 818.5C1664.4 819 1665 819.4 1666.2 820.1C1667.4 820.9 1668 821.3 1669.2 822.2C1670.4 823.1 1671 823.5 1672.2 824.6C1673.4 825.7 1674 826.5 1675.2 827.9C1676.4 829.2 1677 830.2 1678.2 831.2C1679.4 832.3 1680 832.6 1681.2 833.2C1682.4 833.8 1683 833.9 1684.2 834.2C1685.4 834.5 1686 834.6 1687.2 834.7C1688.4 834.8 1689 834.8 1690.2 834.8C1691.4 834.8 1692 834.8 1693.2 834.7C1694.4 834.6 1695 834.6 1696.2 834.3C1697.4 834.1 1698 834 1699.2 833.5C1700.4 833 1701 832.7 1702.2 831.7C1703.4 830.8 1704 830 1705.2 828.6C1706.4 827.3 1707 826.3 1708.2 825.1C1709.4 823.9 1710 823.6 1711.2 822.7C1712.4 821.8 1713 821.3 1714.2 820.5C1715.4 819.7 1716 819.3 1717.2 818.7C1718.4 818.2 1719 817.9 1720.2 817.6C1721.4 817.2 1722 817.1 1723.2 817C1724.4 817 1725 817 1726.2 817.2C1727.4 817.4 1728 817.6 1729.2 818C1730.4 818.5 1731 818.8 1732.2 819.5C1733.4 820.2 1734 820.6 1735.2 821.5C1736.4 822.3 1737 822.8 1738.2 823.8C1739.4 824.8 1740 825.2 1741.2 826.5C1742.4 827.8 1743 829 1744.2 830.3C1745.4 831.5 1746 832 1747.2 832.7C1748.4 833.5 1749 833.6 1750.2 834C1751.4 834.3 1752 834.4 1753.2 834.6C1754.4 834.7 1755 834.7 1756.2 834.8C1757.4 834.8 1758 834.8 1759.2 834.8C1760.4 834.7 1761 834.7 1762.2 834.5C1763.4 834.3 1764 834.3 1765.2 833.9C1766.4 833.5 1767 833.3 1768.2 832.5C1769.4 831.7 1770 831.1 1771.2 829.8C1772.4 828.5 1773 827.2 1774.2 826C1775.4 824.7 1776 824.4 1777.2 823.5C1778.4 822.5 1779 822 1780.2 821.2C1781.4 820.3 1782 819.9 1783.2 819.3C1784.4 818.6 1785 818.3 1786.2 817.9C1787.4 817.5 1788 817.3 1789.2 817.1C1790.4 817 1791 816.9 1792.2 817.1C1793.4 817.2 1794 817.3 1795.2 817.7C1796.4 818.1 1797 818.3 1798.2 819C1799.4 819.6 1800 820 1801.2 820.8C1802.4 821.6 1803 822.1 1804.2 823C1805.4 823.9 1806 824.2 1807.2 825.4C1808.4 826.7 1809 827.8 1810.2 829.1C1811.4 830.5 1812 831.1 1813.2 832C1814.4 833 1815 833.2 1816.2 833.7C1817.4 834.1 1818 834.2 1819.2 834.4C1820.4 834.6 1821 834.7 1822.2 834.7C1823.4 834.8 1824 834.8 1825.2 834.8C1826.4 834.8 1827 834.8 1828.2 834.6C1829.4 834.5 1830 834.5 1831.2 834.1C1832.4 833.8 1833 833.7 1834.2 833C1835.4 832.4 1836 832 1837.2 830.9C1838.4 829.7 1839 828.7 1840.2 827.3C1841.4 826 1842 825.4 1843.2 824.3C1844.4 823.2 1845 822.8 1846.2 821.9C1847.4 821 1848 820.6 1849.2 819.9C1850.4 819.1 1851 818.8 1852.2 818.3C1853.4 817.8 1854 817.6 1855.2 817.3C1856.4 817 1856.2 816.5 1858 817C1859.8 817.5 1861.3 817.3 1864 820C1866.7 822.7 1870.1 828.2 1871.6 830.3" stroke="#0a0a9a" stroke-width="2.3"/>
<path d="M1871.6 830L1928.5 830" stroke="#0a0a9a" stroke-width="2"/>
<path d="M1895.2 815L1918.8 815" stroke="#0a0a9a" stroke-width="2"/>
<path d="M1895.2 839L1918.8 839" stroke="#0a0a9a" stroke-width="2"/>
<text transform="translate(1902.7 802.2) scale(0.76 1)" font-size="28" textLength="43" lengthAdjust="spacingAndGlyphs" fill="#0c0c0c" stroke-width="0.6">XVI</text>
<path d="M1882 844L1895 857L1895 879L1882 896Z" stroke="#0a0a9a" stroke-width="2"/>
<path d="M1884.8 861.5L1891.8 868.5M1891.8 861.5L1884.8 868.5" stroke="#0a0a9a" stroke-width="2"/>
<path d="M1882 896L1895 880L1934 880L1950 896Z" stroke="#0a0a9a" stroke-width="2"/>
<path d="M1913.2 885.5L1923.2 894.5M1923.2 885.5L1913.2 894.5" stroke="#0a0a9a" stroke-width="2"/>
<path d="M1917 895.6L1917 1005.6" stroke="#0a0a9a" stroke-width="2"/>
<path d="M1894.7 1005.6h49a3.7 3.7 0 0 1 0 7.4h-49a3.7 3.7 0 0 1 0 -7.4z" stroke="#0a0a9a" stroke-width="2"/>
<path d="M1934.6 1013v22a5 5 0 0 0 10 0v-22" stroke="#0a0a9a" stroke-width="2"/>
<text transform="translate(1091 682.5) scale(0.74 1)" font-size="28" textLength="47.3" lengthAdjust="spacingAndGlyphs" fill="#0c0c0c" stroke-width="0.6">p=6</text>
<path d="M1115.4 692.3L1154.2 820.2" stroke="#111" stroke-width="1" shape-rendering="crispEdges"/>
<text transform="translate(1183.9 682.5) scale(0.74 1)" font-size="28" textLength="56.8" lengthAdjust="spacingAndGlyphs" fill="#0c0c0c" stroke-width="0.6">z=18</text>
<path d="M1225.5 698L1403 811" stroke="#111" stroke-width="1" shape-rendering="crispEdges"/>
<path d="M1225.5 698L1365.6 838.8" stroke="#111" stroke-width="1" shape-rendering="crispEdges"/>
<text transform="translate(1267 682.5) scale(0.74 1)" font-size="28" textLength="61.5" lengthAdjust="spacingAndGlyphs" fill="#0c0c0c" stroke-width="0.6">z=30</text>
<path d="M1282.4 691.2L1466.8 806.9" stroke="#111" stroke-width="1" shape-rendering="crispEdges"/>
<text transform="translate(1353.6 682.5) scale(0.74 1)" font-size="28" textLength="56.8" lengthAdjust="spacingAndGlyphs" fill="#0c0c0c" stroke-width="0.6">z=15</text>
<path d="M1367.8 694L1468.2 766.7" stroke="#111" stroke-width="1" shape-rendering="crispEdges"/>
<text transform="translate(1468.9 682.5) scale(0.74 1)" font-size="28" textLength="61.5" lengthAdjust="spacingAndGlyphs" fill="#0c0c0c" stroke-width="0.6">z=25</text>
<path d="M1500 697.3L1530.6 859.6" stroke="#111" stroke-width="1" shape-rendering="crispEdges"/>
<text transform="translate(1566.5 682.5) scale(0.74 1)" font-size="28" textLength="61.5" lengthAdjust="spacingAndGlyphs" fill="#0c0c0c" stroke-width="0.6">z=50</text>
<path d="M1576.4 695L1530 803.6" stroke="#111" stroke-width="1" shape-rendering="crispEdges"/>
<text transform="translate(1655.3 682.5) scale(0.74 1)" font-size="28" textLength="47.3" lengthAdjust="spacingAndGlyphs" fill="#0c0c0c" stroke-width="0.6">p=6</text>
<path d="M1663.7 695L1559.6 905" stroke="#111" stroke-width="1" shape-rendering="crispEdges"/>
<text transform="translate(1737 682.5) scale(0.74 1)" font-size="28" textLength="61.5" lengthAdjust="spacingAndGlyphs" fill="#0c0c0c" stroke-width="0.6">z=33</text>
<path d="M1740.7 699L1608 900" stroke="#111" stroke-width="1" shape-rendering="crispEdges"/>
<text transform="translate(1595.6 616.9) scale(0.72 1)" font-size="27" textLength="379.7" lengthAdjust="spacingAndGlyphs" fill="#0c0c0c" stroke-width="0.5">Вал привода круглого стола</text>
<path d="M1794 637L1861 764" stroke="#111" stroke-width="1" shape-rendering="crispEdges"/>
<text transform="translate(1803.7 958.6) scale(0.74 1)" font-size="28" textLength="56.8" lengthAdjust="spacingAndGlyphs" fill="#0c0c0c" stroke-width="0.6">z=18</text>
<path d="M1835.6 935.9L1891 879" stroke="#111" stroke-width="1" shape-rendering="crispEdges"/>
<text transform="translate(1948.8 958.6) scale(0.74 1)" font-size="28" textLength="61.5" lengthAdjust="spacingAndGlyphs" fill="#0c0c0c" stroke-width="0.6">z=24</text>
<path d="M1950.7 938.6L1927 887.3" stroke="#111" stroke-width="1" shape-rendering="crispEdges"/>
<text transform="translate(1239.4 902.6) scale(0.74 1)" font-size="28" textLength="56.8" lengthAdjust="spacingAndGlyphs" fill="#0c0c0c" stroke-width="0.6">z=16</text>
<path d="M1282.4 905.3L1365.6 933" stroke="#111" stroke-width="1" shape-rendering="crispEdges"/>
<text transform="translate(1239.4 933) scale(0.74 1)" font-size="28" textLength="56.8" lengthAdjust="spacingAndGlyphs" fill="#0c0c0c" stroke-width="0.6">z=18</text>
<path d="M1283.7 933L1393.3 958" stroke="#111" stroke-width="1" shape-rendering="crispEdges"/>
<text transform="translate(1239.4 963.6) scale(0.74 1)" font-size="28" textLength="61.5" lengthAdjust="spacingAndGlyphs" fill="#0c0c0c" stroke-width="0.6">z=22</text>
<path d="M1265.7 971.4L1312.9 987.7" stroke="#111" stroke-width="1" shape-rendering="crispEdges"/>
<text transform="translate(1024.4 958.6) scale(0.74 1)" font-size="28" textLength="61.5" lengthAdjust="spacingAndGlyphs" fill="#0c0c0c" stroke-width="0.6">z=23</text>
<path d="M1080.4 948.3L1269 1012" stroke="#111" stroke-width="1" shape-rendering="crispEdges"/>
<text transform="translate(1147.8 953.9) scale(0.74 1)" font-size="28" textLength="61.5" lengthAdjust="spacingAndGlyphs" fill="#0c0c0c" stroke-width="0.6">z=33</text>
<path d="M1192.2 962.2L1314.5 1010.9" stroke="#111" stroke-width="1" shape-rendering="crispEdges"/>
<text transform="translate(1024.4 993.3) scale(0.74 1)" font-size="28" textLength="61.5" lengthAdjust="spacingAndGlyphs" fill="#0c0c0c" stroke-width="0.6">z=46</text>
<path d="M1072.5 982L1206.5 1042" stroke="#111" stroke-width="1" shape-rendering="crispEdges"/>
<text transform="translate(1024.4 1026.6) scale(0.74 1)" font-size="28" textLength="61.5" lengthAdjust="spacingAndGlyphs" fill="#0c0c0c" stroke-width="0.6">z=40</text>
<path d="M1044.7 1035.8L1089.8 1068.6" stroke="#111" stroke-width="1" shape-rendering="crispEdges"/>
<text transform="translate(1490.4 981) scale(0.74 1)" font-size="28" textLength="61.5" lengthAdjust="spacingAndGlyphs" fill="#0c0c0c" stroke-width="0.6">z=37</text>
<path d="M1541.5 976L1604.5 967.6" stroke="#111" stroke-width="1" shape-rendering="crispEdges"/>
<path d="M1398.9 950L1595.4 950" stroke="#0a0a9a" stroke-width="2"/>
<path d="M1617 950L1709.4 950" stroke="#0a0a9a" stroke-width="2"/>
<path d="M1412.7 939L1432 939" stroke="#0a0a9a" stroke-width="2"/>
<path d="M1412.7 961L1432 961" stroke="#0a0a9a" stroke-width="2"/>
<path d="M1463.3 910.4C1464.6 909.5 1472.2 903.9 1474.4 903C1476.6 902.1 1479.5 902.1 1481.8 903C1484.1 903.9 1491.4 910.2 1493.7 911.1C1496 912 1498.7 911.6 1501.1 910.7C1503.5 909.8 1512 904.5 1514.4 903.7C1516.8 902.9 1519.1 902.5 1521.8 903.7C1524.5 904.9 1534.4 913 1537.4 914.1C1540.4 915.2 1545.2 913.9 1547.7 912.9C1550.2 911.9 1557.2 906.7 1558.5 905.9" stroke="#0a0a9a" stroke-width="2.3"/>
<path d="M1558.5 906L1604 906" stroke="#0a0a9a" stroke-width="2"/>
<path d="M1508.1 898.1C1510.3 897.2 1513.6 893.4 1518.9 893.7C1524.2 894 1531.6 898.4 1534.8 899.6" stroke="#0a0a9a" stroke-width="2.3"/>
<path d="M1516 917L1520 913L1524 917" stroke="#0a0a9a" stroke-width="2"/>
<rect x="1595" y="890" width="22" height="166" stroke="#0a0a9a" stroke-width="2"/>
<path d="M1595.4 929L1617 929" stroke="#0a0a9a" stroke-width="2"/>
<path d="M1595.4 976L1617 976" stroke="#0a0a9a" stroke-width="2"/>
<path d="M1595.4 1024L1617 1024" stroke="#0a0a9a" stroke-width="2"/>
<path d="M1600.8 948L1608.8 958M1608.8 948L1600.8 958" stroke="#0a0a9a" stroke-width="2"/>
<path d="M1600.3 1035.3L1610.3 1045.3M1610.3 1035.3L1600.3 1045.3" stroke="#0a0a9a" stroke-width="2"/>
<path d="M1617 906L1760.7 906" stroke="#0a0a9a" stroke-width="2"/>
<path d="M1617 894L1630.3 894" stroke="#0a0a9a" stroke-width="2"/>
<path d="M1617 923L1629.3 923" stroke="#0a0a9a" stroke-width="2"/>
<path d="M1630 894L1634 900L1629 908L1634 915L1629 923" stroke="#0a0a9a" stroke-width="2"/>
<path d="M1656 894L1643 894L1648 899L1643 908L1648 916L1642 923L1656 923Z" stroke="#0a0a9a" stroke-width="2"/>
<path d="M1624.4 899L1662.9 899" stroke="#0a0a9a" stroke-width="2"/>
<text transform="translate(1634.5 886) scale(0.74 1)" font-size="27" fill="#0c0c0c" stroke-width="0.5">М6</text>
<path d="M1617 979L1629.3 979" stroke="#0a0a9a" stroke-width="2"/>
<path d="M1617 1019L1629.3 1019" stroke="#0a0a9a" stroke-width="2"/>
<path d="M1629 979L1637 986L1629 996L1637 1008L1629 1019" stroke="#0a0a9a" stroke-width="2"/>
<path d="M1656 979L1642 979L1651 986L1644 996L1651 1008L1642 1019L1656 1019Z" stroke="#0a0a9a" stroke-width="2"/>
<path d="M1624.4 990L1665.8 990" stroke="#0a0a9a" stroke-width="2"/>
<text transform="translate(1648.3 970.5) scale(0.74 1)" font-size="27" fill="#0c0c0c" stroke-width="0.5">М5</text>
<path d="M1763 891.5h3.7a2.3 2.3 0 0 1 2.3 2.3v28.7a2.3 2.3 0 0 1 -2.3 2.3h-3.7a2.3 2.3 0 0 1 -2.3 -2.3v-28.7a2.3 2.3 0 0 1 2.3 -2.3z" stroke="#0a0a9a" stroke-width="2"/>
<path d="M1769 918.7h13a2.3 2.3 0 0 1 0 4.7h-13" stroke="#0a0a9a" stroke-width="2"/>
<path d="M1752.3 976h2.7a2.3 2.3 0 0 1 2.3 2.3v41.1a2.3 2.3 0 0 1 -2.3 2.3h-2.7a2.3 2.3 0 0 1 -2.3 -2.3v-41.1a2.3 2.3 0 0 1 2.3 -2.3z" stroke="#0a0a9a" stroke-width="2"/>
<path d="M1757 1014.8h15.3v4.7h-15.3" stroke="#0a0a9a" stroke-width="2"/>
<text transform="translate(1744 954) scale(0.76 1)" font-size="28" textLength="38.2" lengthAdjust="spacingAndGlyphs" fill="#0c0c0c" stroke-width="0.6">XIV</text>
<text transform="translate(1782.9 993) scale(0.76 1)" font-size="28" textLength="36.4" lengthAdjust="spacingAndGlyphs" fill="#0c0c0c" stroke-width="0.6">XIII</text>
<path d="M1322.8 995L1604 995" stroke="#0a0a9a" stroke-width="2"/>
<path d="M1617 995L1750 995" stroke="#0a0a9a" stroke-width="2"/>
<path d="M1433.5 1035L1461 1035" stroke="#0a0a9a" stroke-width="2"/>
<path d="M1476.4 1035L1595.4 1035" stroke="#0a0a9a" stroke-width="2"/>
<path d="M1617 1035L1655.8 1035" stroke="#0a0a9a" stroke-width="2"/>
<text transform="translate(1673.3 1050) scale(0.76 1)" font-size="28" textLength="31.1" lengthAdjust="spacingAndGlyphs" fill="#0c0c0c" stroke-width="0.6">XII</text>
<path d="M1491.6 1026L1511 1026" stroke="#0a0a9a" stroke-width="2"/>
<path d="M1491.6 1050L1511 1050" stroke="#0a0a9a" stroke-width="2"/>
<path d="M1566 895L1586 895" stroke="#0a0a9a" stroke-width="2"/>
<path d="M1566 920L1586 920" stroke="#0a0a9a" stroke-width="2"/>
<path d="M1566 940L1586 940" stroke="#0a0a9a" stroke-width="2"/>
<path d="M1566 963L1586 963" stroke="#0a0a9a" stroke-width="2"/>
<path d="M1566 987L1586 987" stroke="#0a0a9a" stroke-width="2"/>
<path d="M1566 1008L1586 1008" stroke="#0a0a9a" stroke-width="2"/>
<path d="M1566 1025L1586 1025" stroke="#0a0a9a" stroke-width="2"/>
<path d="M1566 1051L1586 1051" stroke="#0a0a9a" stroke-width="2"/>
<path d="M1688.8 898L1709.3 898" stroke="#0a0a9a" stroke-width="2"/>
<path d="M1688.8 920L1709.3 920" stroke="#0a0a9a" stroke-width="2"/>
<path d="M1688.8 940L1709.3 940" stroke="#0a0a9a" stroke-width="2"/>
<path d="M1688.8 962L1709.3 962" stroke="#0a0a9a" stroke-width="2"/>
<path d="M1688.8 986L1709.3 986" stroke="#0a0a9a" stroke-width="2"/>
<path d="M1688.8 1006L1709.3 1006" stroke="#0a0a9a" stroke-width="2"/>
<rect x="1461" y="1015" width="15" height="97" stroke="#0a0a9a" stroke-width="2"/>
<path d="M1461 1063L1476.4 1063" stroke="#0a0a9a" stroke-width="2"/>
<path d="M1464.9 1034L1472.9 1044M1472.9 1034L1464.9 1044" stroke="#0a0a9a" stroke-width="2"/>
<path d="M1464.9 1084.6L1472.9 1092.6M1472.9 1084.6L1464.9 1092.6" stroke="#0a0a9a" stroke-width="2"/>
<path d="M1449.3 1087L1461 1087" stroke="#0a0a9a" stroke-width="2"/>
<text transform="translate(1817 1038.4) scale(0.74 1)" font-size="28" textLength="61.5" lengthAdjust="spacingAndGlyphs" fill="#0c0c0c" stroke-width="0.6">z=33</text>
<path d="M1809.8 1036.4L1599.8 1009.2" stroke="#111" stroke-width="1" shape-rendering="crispEdges"/>
<text transform="translate(1817 1086.6) scale(0.74 1)" font-size="28" textLength="56.8" lengthAdjust="spacingAndGlyphs" fill="#0c0c0c" stroke-width="0.6">z=18</text>
<path d="M1802.8 1080.5L1605.9 1048" stroke="#111" stroke-width="1" shape-rendering="crispEdges"/>
<text transform="translate(1583 1088) scale(0.74 1)" font-size="28" textLength="61.5" lengthAdjust="spacingAndGlyphs" fill="#0c0c0c" stroke-width="0.6">z=35</text>
<path d="M1579 1071.4L1471.6 1052.2" stroke="#111" stroke-width="1" shape-rendering="crispEdges"/>
<text transform="translate(1586.5 1111) scale(0.74 1)" font-size="28" textLength="61.5" lengthAdjust="spacingAndGlyphs" fill="#0c0c0c" stroke-width="0.6">z=28</text>
<path d="M1575.4 1110.2L1470 1080.5" stroke="#111" stroke-width="1" shape-rendering="crispEdges"/>
<text transform="translate(1586.5 1147) scale(0.74 1)" font-size="28" textLength="61.5" lengthAdjust="spacingAndGlyphs" fill="#0c0c0c" stroke-width="0.6">z=33</text>
<path d="M1574 1142L1438.9 1107.2" stroke="#111" stroke-width="1" shape-rendering="crispEdges"/>
<text transform="translate(1586.5 1186) scale(0.74 1)" font-size="28" textLength="61.5" lengthAdjust="spacingAndGlyphs" fill="#0c0c0c" stroke-width="0.6">z=67</text>
<path d="M1577.6 1179L1437.7 1150.7" stroke="#111" stroke-width="1" shape-rendering="crispEdges"/>
<text transform="translate(1495 1198.4) scale(0.74 1)" font-size="28" textLength="61.5" lengthAdjust="spacingAndGlyphs" fill="#0c0c0c" stroke-width="0.6">z=37</text>
<path d="M1484.7 1192.9L1322.1 1160.6" stroke="#111" stroke-width="1" shape-rendering="crispEdges"/>
<text transform="translate(1586.5 1233) scale(0.74 1)" font-size="28" textLength="61.5" lengthAdjust="spacingAndGlyphs" fill="#0c0c0c" stroke-width="0.6">z=27</text>
<path d="M1574.8 1230.9L1379.4 1212" stroke="#111" stroke-width="1" shape-rendering="crispEdges"/>
<text transform="translate(1586.5 1268.5) scale(0.74 1)" font-size="28" textLength="61.5" lengthAdjust="spacingAndGlyphs" fill="#0c0c0c" stroke-width="0.6">z=50</text>
<path d="M1574.8 1266.4L1467.8 1289" stroke="#111" stroke-width="1" shape-rendering="crispEdges"/>
<text transform="translate(1586.5 1308.6) scale(0.74 1)" font-size="28" textLength="61.5" lengthAdjust="spacingAndGlyphs" fill="#0c0c0c" stroke-width="0.6">z=50</text>
<path d="M1576 1309.1L1439 1338.7" stroke="#111" stroke-width="1" shape-rendering="crispEdges"/>
<text transform="translate(1586.4 1344.5) scale(0.74 1)" font-size="28" textLength="61.5" lengthAdjust="spacingAndGlyphs" fill="#0c0c0c" stroke-width="0.6">z=26</text>
<path d="M1576.5 1342.6L1465.1 1376.1" stroke="#111" stroke-width="1" shape-rendering="crispEdges"/>
<text transform="translate(1496.6 1094.4) scale(0.76 1)" font-size="28" textLength="26.3" lengthAdjust="spacingAndGlyphs" fill="#0c0c0c" stroke-width="0.6">XI</text>
<text transform="translate(1490.2 1169.3) scale(0.76 1)" font-size="28" textLength="21.8" lengthAdjust="spacingAndGlyphs" fill="#0c0c0c" stroke-width="0.6">X</text>
<text transform="translate(1480.5 1242.5) scale(0.76 1)" font-size="28" textLength="25.8" lengthAdjust="spacingAndGlyphs" fill="#0c0c0c" stroke-width="0.6">IX</text>
<text transform="translate(1502.5 1310.5) scale(0.76 1)" font-size="28" textLength="31.3" lengthAdjust="spacingAndGlyphs" fill="#0c0c0c" stroke-width="0.6">VIII</text>
<text transform="translate(1507.8 1353.3) scale(0.76 1)" font-size="28" textLength="24.3" lengthAdjust="spacingAndGlyphs" fill="#0c0c0c" stroke-width="0.6">VII</text>
<rect x="1305" y="985" width="18" height="21" stroke="#0a0a9a" stroke-width="2"/>
<path d="M1310.5 991.8L1318.5 999.8M1318.5 991.8L1310.5 999.8" stroke="#0a0a9a" stroke-width="2"/>
<path d="M1286.3 995L1305.2 995" stroke="#0a0a9a" stroke-width="2"/>
<path d="M1337 986L1363.7 986" stroke="#0a0a9a" stroke-width="2"/>
<path d="M1337.7 1005L1360.6 1005" stroke="#0a0a9a" stroke-width="2"/>
<path d="M1348 1005.3L1348 1043.6" stroke="#0a0a9a" stroke-width="2"/>
<path d="M1334.4 1019L1345.5 1019" stroke="#0a0a9a" stroke-width="2"/>
<path d="M1333.5 1034L1345.5 1034" stroke="#0a0a9a" stroke-width="2"/>
<path d="M1251.5 1025L1364.9 1025" stroke="#0a0a9a" stroke-width="2"/>
<path d="M1305 1006L1305 1010L1274 1010L1274 1004L1261 1014L1261 1036" stroke="#0a0a9a" stroke-width="2"/>
<path d="M1271 1046L1304 1046L1304 1049L1323 1049L1323 1006" stroke="#0a0a9a" stroke-width="2"/>
<path d="M1261 1020L1323 1020" stroke="#0a0a9a" stroke-width="2"/>
<path d="M1261 1033L1323 1033" stroke="#0a0a9a" stroke-width="2"/>
<path d="M1211 987.7L1211 1015.5" stroke="#0a0a9a" stroke-width="2"/>
<path d="M1222 987.7L1222 1067.5" stroke="#0a0a9a" stroke-width="2"/>
<path d="M1234 987.7L1234 1015.5" stroke="#0a0a9a" stroke-width="2"/>
<path d="M1173 1049L1186 1036L1261 1036L1274 1049Z" stroke="#0a0a9a" stroke-width="2"/>
<path d="M1216.6 1040.3L1226.6 1046.3M1226.6 1040.3L1216.6 1046.3" stroke="#0a0a9a" stroke-width="2"/>
<path d="M1070 1045L1112 1045L1112 1068L1127 1068L1127 1060L1150 1060L1164 1074L1151 1087L1164 1100L1151 1114L1127 1114L1127 1103L1112 1103L1112 1128L1070 1128Z" stroke="#0a0a9a" stroke-width="2"/>
<path d="M1171 1060L1200 1060L1200 1114L1171 1114L1183 1100L1171 1087L1183 1074Z" stroke="#0a0a9a" stroke-width="2"/>
<path d="M1018 1084L1069.7 1084" stroke="#0a0a9a" stroke-width="2"/>
<path d="M1030 1072L1050.5 1072" stroke="#0a0a9a" stroke-width="2"/>
<path d="M1030 1099L1054 1099" stroke="#0a0a9a" stroke-width="2"/>
<path d="M1084 1078L1099.7 1078" stroke="#0a0a9a" stroke-width="2"/>
<path d="M1116.4 1078L1128 1078" stroke="#0a0a9a" stroke-width="2"/>
<path d="M1084 1084L1129.8 1084" stroke="#0a0a9a" stroke-width="2"/>
<path d="M1084 1094L1099.7 1094" stroke="#0a0a9a" stroke-width="2"/>
<path d="M1116.4 1094L1126.8 1094" stroke="#0a0a9a" stroke-width="2"/>
<path d="M1151 1087L1172 1087" stroke="#0a0a9a" stroke-width="2"/>
<path d="M1172 1087.5L1441 1087.5" stroke="#e39a60" stroke-width="1" stroke-dasharray="22 5 4 5"/>
<text transform="translate(1123.3 1034.4) scale(0.74 1)" font-size="27" fill="#0c0c0c" stroke-width="0.5">М3</text>
<text transform="translate(1387.3 1034.4) scale(0.74 1)" font-size="27" fill="#0c0c0c" stroke-width="0.5">М4</text>
<path d="M1200 1068L1306.4 1068" stroke="#0a0a9a" stroke-width="2"/>
<path d="M1200 1102L1306.4 1102" stroke="#0a0a9a" stroke-width="2"/>
<path d="M1174.2 1075L1321 1075" stroke="#0a0a9a" stroke-width="2"/>
<rect x="1234" y="1060" width="11" height="57" stroke="#0a0a9a" stroke-width="2"/>
<path d="M1306 1068L1306 1056L1374 1056L1374 1068" stroke="#0a0a9a" stroke-width="2"/>
<path d="M1306 1102L1306 1117L1374 1117L1374 1102" stroke="#0a0a9a" stroke-width="2"/>
<path d="M1373.7 1068L1430.3 1068" stroke="#0a0a9a" stroke-width="2"/>
<path d="M1373.7 1102L1430.3 1102" stroke="#0a0a9a" stroke-width="2"/>
<path d="M1321 1055.9L1321 1075.3" stroke="#0a0a9a" stroke-width="2"/>
<path d="M1321 1095.2L1321 1116.7" stroke="#0a0a9a" stroke-width="2"/>
<path d="M1338 1055.9L1338 1075.3" stroke="#0a0a9a" stroke-width="2"/>
<path d="M1338 1095.2L1338 1116.7" stroke="#0a0a9a" stroke-width="2"/>
<path d="M1357 1055.9L1357 1075.3" stroke="#0a0a9a" stroke-width="2"/>
<path d="M1357 1095.2L1357 1116.7" stroke="#0a0a9a" stroke-width="2"/>
<path d="M1313 1070.1L1313 1104.8" stroke="#0a0a9a" stroke-width="2"/>
<path d="M1331 1070.1L1331 1104.8" stroke="#0a0a9a" stroke-width="2"/>
<path d="M1346 1070.1L1346 1104.8" stroke="#0a0a9a" stroke-width="2"/>
<path d="M1364 1070.1L1364 1104.8" stroke="#0a0a9a" stroke-width="2"/>
<path d="M1390.3 1059L1413.4 1059" stroke="#0a0a9a" stroke-width="2"/>
<path d="M1390.3 1112L1413.4 1112" stroke="#0a0a9a" stroke-width="2"/>
<rect x="1430" y="1052" width="19" height="166" stroke="#0a0a9a" stroke-width="2"/>
<path d="M1430.3 1122L1449.3 1122" stroke="#0a0a9a" stroke-width="2"/>
<path d="M1430 1217.7L1430 1231.6" stroke="#0a0a9a" stroke-width="2"/>
<path d="M1430 1235.8L1430 1277.4" stroke="#0a0a9a" stroke-width="2"/>
<path d="M1430 1285L1430 1298.5" stroke="#0a0a9a" stroke-width="2"/>
<path d="M1449 1217.7L1449 1232.5" stroke="#0a0a9a" stroke-width="2"/>
<path d="M1449 1240L1449 1255" stroke="#0a0a9a" stroke-width="2"/>
<path d="M1449 1260L1449 1276.6" stroke="#0a0a9a" stroke-width="2"/>
<path d="M1449 1285L1449 1298" stroke="#0a0a9a" stroke-width="2"/>
<path d="M1430 1305L1430 1453L1449 1453L1449 1305" stroke="#0a0a9a" stroke-width="2"/>
<path d="M1430.3 1322L1449.3 1322" stroke="#0a0a9a" stroke-width="2"/>
<path d="M1430.3 1398L1449.3 1398" stroke="#0a0a9a" stroke-width="2"/>
<path d="M1435.5 1420.4L1444.5 1429.4M1444.5 1420.4L1435.5 1429.4" stroke="#0a0a9a" stroke-width="2"/>
<path d="M994 1165L1024 1165" stroke="#0a0a9a" stroke-width="2"/>
<path d="M1043.4 1165L1050.8 1165" stroke="#0a0a9a" stroke-width="2"/>
<path d="M1093 1165L1275 1165" stroke="#0a0a9a" stroke-width="2"/>
<path d="M1322 1165L1430.3 1165" stroke="#0a0a9a" stroke-width="2"/>
<path d="M1449.3 1165L1471.9 1165" stroke="#0a0a9a" stroke-width="2"/>
<path d="M1282 1165L1294.5 1165" stroke="#0a0a9a" stroke-width="2"/>
<path d="M1302.4 1165L1314.7 1165" stroke="#0a0a9a" stroke-width="2"/>
<path d="M992 1154L1014.6 1154" stroke="#0a0a9a" stroke-width="2"/>
<path d="M993.5 1177L1017 1177" stroke="#0a0a9a" stroke-width="2"/>
<path d="M1392.6 1156L1414.6 1156" stroke="#0a0a9a" stroke-width="2"/>
<path d="M1392.6 1181L1414.6 1181" stroke="#0a0a9a" stroke-width="2"/>
<rect x="1024" y="1143" width="19" height="132" stroke="#0a0a9a" stroke-width="2"/>
<path d="M1023.8 1190L1043.2 1190" stroke="#0a0a9a" stroke-width="2"/>
<path d="M1030.2 1162.3L1036.2 1168.3M1036.2 1162.3L1030.2 1168.3" stroke="#0a0a9a" stroke-width="2"/>
<rect x="1051" y="1137" width="9" height="61" stroke="#0a0a9a" stroke-width="2"/>
<path d="M1059.6 1148L1069.8 1148" stroke="#0a0a9a" stroke-width="2"/>
<path d="M1059.6 1189L1069.8 1189" stroke="#0a0a9a" stroke-width="2"/>
<rect x="1070" y="1136" width="8" height="61" stroke="#0a0a9a" stroke-width="2"/>
<rect x="1078" y="1128" width="15" height="129" stroke="#0a0a9a" stroke-width="2"/>
<path d="M1078 1204L1093.2 1204" stroke="#0a0a9a" stroke-width="2"/>
<path d="M1043.2 1210L1078 1210" stroke="#0a0a9a" stroke-width="2"/>
<path d="M1043.2 1252L1078 1252" stroke="#0a0a9a" stroke-width="2"/>
<path d="M1093.2 1146L1116.1 1146" stroke="#0a0a9a" stroke-width="2"/>
<path d="M1093.2 1189L1116.1 1189" stroke="#0a0a9a" stroke-width="2"/>
<path d="M1116 1146L1106 1156L1115 1165L1106 1178L1116 1189" stroke="#0a0a9a" stroke-width="2"/>
<path d="M1142 1146L1126 1146L1116 1156L1128 1165L1117 1178L1126 1189L1142 1189Z" stroke="#0a0a9a" stroke-width="2"/>
<text transform="translate(1114.5 1213.1) scale(0.74 1)" font-size="27" fill="#0c0c0c" stroke-width="0.5">М2</text>
<path d="M991.5 1231L1063.4 1231" stroke="#0a0a9a" stroke-width="2"/>
<path d="M1072.7 1231L1151 1231" stroke="#0a0a9a" stroke-width="2"/>
<path d="M1170.2 1231L1185 1231" stroke="#0a0a9a" stroke-width="2"/>
<path d="M1200 1231L1287.4 1231" stroke="#0a0a9a" stroke-width="2"/>
<path d="M1305.9 1231L1348 1231" stroke="#0a0a9a" stroke-width="2"/>
<path d="M1363.3 1231L1373 1231" stroke="#0a0a9a" stroke-width="2"/>
<path d="M1388 1231L1422.7 1231" stroke="#0a0a9a" stroke-width="2"/>
<path d="M996.3 1221L1016 1221" stroke="#0a0a9a" stroke-width="2"/>
<path d="M996.3 1244L1016 1244" stroke="#0a0a9a" stroke-width="2"/>
<path d="M1114 1221L1133 1221" stroke="#0a0a9a" stroke-width="2"/>
<path d="M1114 1243L1133 1243" stroke="#0a0a9a" stroke-width="2"/>
<path d="M1398.3 1223L1418 1223" stroke="#0a0a9a" stroke-width="2"/>
<path d="M1401.3 1245L1416.6 1245" stroke="#0a0a9a" stroke-width="2"/>
<rect x="1151" y="1195" width="19" height="79" stroke="#0a0a9a" stroke-width="2"/>
<path d="M1158.5 1229.3L1164.5 1235.3M1164.5 1229.3L1158.5 1235.3" stroke="#0a0a9a" stroke-width="2"/>
<rect x="1185" y="1204" width="15" height="64" stroke="#0a0a9a" stroke-width="2"/>
<path d="M1189.7 1228L1195.7 1234M1195.7 1228L1189.7 1234" stroke="#0a0a9a" stroke-width="2"/>
<path d="M1170.2 1211L1185 1211" stroke="#0a0a9a" stroke-width="2"/>
<path d="M1170.2 1257L1185 1257" stroke="#0a0a9a" stroke-width="2"/>
<rect x="1287" y="1128" width="19" height="219" stroke="#0a0a9a" stroke-width="2"/>
<path d="M1287.4 1211L1305.9 1211" stroke="#0a0a9a" stroke-width="2"/>
<path d="M1287.4 1258L1305.9 1258" stroke="#0a0a9a" stroke-width="2"/>
<path d="M1293.1 1227.6L1301.1 1235.6M1301.1 1227.6L1293.1 1235.6" stroke="#0a0a9a" stroke-width="2"/>
<rect x="1262" y="1136" width="15" height="68" stroke="#0a0a9a" stroke-width="2"/>
<rect x="1318" y="1133" width="16" height="72" stroke="#0a0a9a" stroke-width="2"/>
<path d="M1277 1143L1287.4 1143" stroke="#0a0a9a" stroke-width="2"/>
<path d="M1305.9 1143L1317.5 1143" stroke="#0a0a9a" stroke-width="2"/>
<path d="M1277 1195L1287.4 1195" stroke="#0a0a9a" stroke-width="2"/>
<path d="M1305.9 1195L1317.5 1195" stroke="#0a0a9a" stroke-width="2"/>
<path d="M1256.2 1153L1346.4 1153" stroke="#0a0a9a" stroke-width="2"/>
<rect x="1348" y="1209" width="15" height="49" stroke="#0a0a9a" stroke-width="2"/>
<path d="M1351.6 1229.9L1359.6 1237.9M1359.6 1229.9L1351.6 1237.9" stroke="#0a0a9a" stroke-width="2"/>
<rect x="1373" y="1205" width="15" height="63" stroke="#0a0a9a" stroke-width="2"/>
<path d="M1375.9 1228.8L1383.9 1236.8M1383.9 1228.8L1375.9 1236.8" stroke="#0a0a9a" stroke-width="2"/>
<path d="M1113.6 1302L1244.2 1302" stroke="#0a0a9a" stroke-width="2"/>
<path d="M1332.5 1302L1457.2 1302" stroke="#0a0a9a" stroke-width="2"/>
<path d="M1272 1302L1286.5 1302" stroke="#0a0a9a" stroke-width="2"/>
<path d="M1306.8 1302L1322 1302" stroke="#0a0a9a" stroke-width="2"/>
<path d="M1119.9 1290L1143 1290" stroke="#0a0a9a" stroke-width="2"/>
<path d="M1117.5 1313L1143 1313" stroke="#0a0a9a" stroke-width="2"/>
<path d="M1392.6 1292L1411.8 1292" stroke="#0a0a9a" stroke-width="2"/>
<path d="M1392.6 1317L1411.8 1317" stroke="#0a0a9a" stroke-width="2"/>
<rect x="1244" y="1274" width="19" height="52" stroke="#0a0a9a" stroke-width="2"/>
<rect x="1332" y="1268" width="19" height="68" stroke="#0a0a9a" stroke-width="2"/>
<path d="M1237 1291L1364.9 1291" stroke="#0a0a9a" stroke-width="2"/>
<path d="M1263.2 1283L1287.4 1283" stroke="#0a0a9a" stroke-width="2"/>
<path d="M1305.9 1283L1332.5 1283" stroke="#0a0a9a" stroke-width="2"/>
<path d="M1263.2 1317L1287.4 1317" stroke="#0a0a9a" stroke-width="2"/>
<path d="M1305.9 1317L1332.5 1317" stroke="#0a0a9a" stroke-width="2"/>
<rect x="1457" y="1278" width="19" height="110" stroke="#0a0a9a" stroke-width="2"/>
<path d="M1457.2 1331L1476.4 1331" stroke="#0a0a9a" stroke-width="2"/>
<path d="M1461 1297.8L1469 1305.8M1469 1297.8L1461 1305.8" stroke="#0a0a9a" stroke-width="2"/>
<path d="M1449.3 1343L1457.2 1343" stroke="#0a0a9a" stroke-width="2"/>
<path d="M1449.3 1357L1457.2 1357" stroke="#0a0a9a" stroke-width="2"/>
<path d="M1449.3 1376L1457.2 1376" stroke="#0a0a9a" stroke-width="2"/>
<path d="M1405 1336.6L1405 1381.5" stroke="#0a0a9a" stroke-width="2"/>
<path d="M1404.9 1341.5L1394.2 1349.8" stroke="#0a0a9a" stroke-width="2"/>
<path d="M1404.9 1348.2L1394.2 1356.5" stroke="#0a0a9a" stroke-width="2"/>
<path d="M1404.9 1354.8L1394.2 1363.1" stroke="#0a0a9a" stroke-width="2"/>
<path d="M1404.9 1361.5L1394.2 1369.8" stroke="#0a0a9a" stroke-width="2"/>
<path d="M1404.9 1368.1L1394.2 1376.4" stroke="#0a0a9a" stroke-width="2"/>
<path d="M1404.9 1374.8L1394.2 1383.1" stroke="#0a0a9a" stroke-width="2"/>
<path d="M1404.9 1357L1440.6 1357" stroke="#0a0a9a" stroke-width="2"/>
<path d="M1466.7 1357L1495.6 1357" stroke="#0a0a9a" stroke-width="2"/>
<path d="M1411.5 1426L1430.3 1426" stroke="#0a0a9a" stroke-width="2"/>
<path d="M1449.3 1426L1554.7 1426" stroke="#0a0a9a" stroke-width="2"/>
<circle cx="1594.4" cy="1427.7" r="39.8" stroke="#0a0a9a" stroke-width="2"/>
<text transform="translate(1577.6 1434.6) scale(0.86 1)" font-size="26" fill="#0c0c0c" stroke-width="0.5">М2</text>
<text transform="translate(1715.6 1429.5) scale(0.72 1)" font-size="27" textLength="133.3" lengthAdjust="spacingAndGlyphs" fill="#0c0c0c" stroke-width="0.5">N=2,2 кВт</text>
<text transform="translate(1715.6 1467.7) scale(0.72 1)" font-size="27" textLength="193.8" lengthAdjust="spacingAndGlyphs" fill="#0c0c0c" stroke-width="0.5">n=1430 об/мин</text>
<path d="M1221.7 1102.8C1222.6 1104.2 1226.9 1105.8 1226.2 1109.7C1225.5 1113.6 1220.2 1117.1 1218.4 1121.6C1216.6 1126.1 1215.6 1126.5 1217.4 1131.4C1219.2 1136.3 1224.8 1140 1227.2 1145.3C1229.6 1150.6 1230.2 1153.2 1229.2 1157.1C1228.2 1161 1224.7 1161.7 1222.3 1164C1219.9 1166.3 1218.6 1164.5 1217.4 1168C1216.2 1171.5 1215.6 1176.1 1216.4 1180.8C1217.2 1185.5 1218.4 1186.2 1221.3 1190.7C1224.2 1195.2 1228.4 1197.2 1230.2 1202.5C1232 1207.8 1232.2 1210.6 1230.2 1216.3C1228.2 1222 1223.1 1225.6 1220.3 1230.1C1217.5 1234.6 1216.2 1234.7 1216.8 1238C1217.4 1241.3 1220.3 1241.8 1223.3 1245.9C1226.3 1250 1229.6 1252.5 1231.2 1257.8C1232.8 1263.1 1233.5 1266.7 1231.2 1271.6C1228.9 1276.5 1223.2 1276.9 1220.3 1281.4C1217.4 1285.9 1217.2 1288.4 1217.4 1293.3C1217.6 1298.2 1219.1 1300.2 1221.3 1305.1C1223.5 1310 1227 1311.7 1228.2 1317C1229.4 1322.3 1230.1 1325.1 1227.2 1330.8C1224.3 1336.5 1217.5 1340.9 1214.4 1344.6C1211.3 1348.3 1211.8 1344.8 1212.4 1348.5C1213 1352.2 1213.9 1357.1 1217.4 1362.4C1220.9 1367.7 1225.7 1370.1 1229.2 1374.2C1232.7 1378.3 1233.7 1378.8 1234.1 1382.1C1234.5 1385.4 1235.5 1385.9 1231.2 1390C1226.9 1394.1 1217.9 1397.9 1213.4 1401.8C1208.9 1405.7 1209.2 1404.7 1209.3 1409C1209.4 1413.3 1210.8 1418 1214.1 1422.4C1217.4 1426.8 1220.3 1427.5 1225.3 1430.5C1230.3 1433.5 1235.5 1434.4 1238.2 1436.9C1240.9 1439.4 1240.9 1440.2 1238.2 1442.5C1235.5 1444.8 1230.9 1445.5 1225.3 1448.1C1219.7 1450.7 1214.4 1452.5 1210.9 1455.3C1207.4 1458.1 1207.8 1459.1 1208.5 1461.7C1209.2 1464.3 1210.3 1464.6 1214.1 1468.1C1217.9 1471.6 1223.4 1474.7 1226.9 1478.5C1230.4 1482.3 1231.2 1483.3 1230.9 1486.6C1230.6 1489.9 1228.8 1490.3 1225.3 1494.6C1221.8 1498.9 1216.9 1503.1 1214.1 1507.4C1211.3 1511.7 1211.7 1511.4 1211.7 1515.4C1211.7 1519.4 1211.6 1522.3 1214.1 1526.6C1216.6 1530.9 1219 1532.5 1223.7 1536.2C1228.4 1539.9 1233.1 1541.6 1236.6 1544.3C1240.1 1547 1241 1547 1240.6 1549.1C1240.2 1551.2 1238.7 1552.2 1234.9 1554.7C1231.1 1557.2 1226.4 1558 1222.1 1561.1C1217.8 1564.2 1216.1 1566.4 1214.1 1569.9C1212.1 1573.4 1211.8 1574.6 1212.5 1577.9C1213.2 1581.2 1214 1582.6 1217.3 1585.9C1220.6 1589.2 1225.5 1590.2 1228.5 1593.9C1231.5 1597.6 1231 1599.5 1231.7 1603.6C1232.4 1607.7 1232.4 1610.9 1231.7 1613.5C1231 1616.1 1230.5 1615.6 1228.5 1616.4C1226.5 1617.2 1223.4 1617 1222.1 1617.2" stroke="#0a0a9a" stroke-width="2.3"/>
<path d="M1216.5 1485.7Q1222 1490 1217.3 1496.2" stroke="#0a0a9a" stroke-width="2"/>
<path d="M1236.6 1475.3Q1247 1491 1232.5 1508.2" stroke="#0a0a9a" stroke-width="2"/>
<text transform="translate(1156.8 1139.1) scale(0.74 1)" font-size="28" textLength="61.5" lengthAdjust="spacingAndGlyphs" fill="#0c0c0c" stroke-width="0.6">z=34</text>
<path d="M1206 1129.4L1267.8 1146" stroke="#111" stroke-width="1" shape-rendering="crispEdges"/>
<text transform="translate(1366.5 1139.1) scale(0.74 1)" font-size="28" textLength="61.5" lengthAdjust="spacingAndGlyphs" fill="#0c0c0c" stroke-width="0.6">z=40</text>
<path d="M1351 1139.5L1297.8 1139.5" stroke="#111" stroke-width="1" shape-rendering="crispEdges"/>
<text transform="translate(890.5 1113.7) scale(0.74 1)" font-size="28" textLength="61.5" lengthAdjust="spacingAndGlyphs" fill="#0c0c0c" stroke-width="0.6">z=40</text>
<path d="M946.9 1102.2L1086 1139.2" stroke="#111" stroke-width="1" shape-rendering="crispEdges"/>
<text transform="translate(890.5 1151.2) scale(0.74 1)" font-size="28" textLength="56.8" lengthAdjust="spacingAndGlyphs" fill="#0c0c0c" stroke-width="0.6">z=13</text>
<path d="M938 1137L1033.8 1181.3" stroke="#111" stroke-width="1" shape-rendering="crispEdges"/>
<text transform="translate(890.5 1196.5) scale(0.74 1)" font-size="28" textLength="61.5" lengthAdjust="spacingAndGlyphs" fill="#0c0c0c" stroke-width="0.6">z=45</text>
<path d="M944.1 1185L1031 1210.4" stroke="#111" stroke-width="1" shape-rendering="crispEdges"/>
<text transform="translate(890.5 1265.9) scale(0.74 1)" font-size="28" textLength="56.8" lengthAdjust="spacingAndGlyphs" fill="#0c0c0c" stroke-width="0.6">z=18</text>
<path d="M939.1 1260.3L1083.8 1217.2" stroke="#111" stroke-width="1" shape-rendering="crispEdges"/>
<text transform="translate(1002.4 1345.4) scale(0.74 1)" font-size="28" textLength="61.5" lengthAdjust="spacingAndGlyphs" fill="#0c0c0c" stroke-width="0.6">z=36</text>
<path d="M1027.4 1319.5L1161 1251" stroke="#111" stroke-width="1" shape-rendering="crispEdges"/>
<text transform="translate(1108.7 1345.4) scale(0.74 1)" font-size="28" textLength="61.5" lengthAdjust="spacingAndGlyphs" fill="#0c0c0c" stroke-width="0.6">z=24</text>
<path d="M1149.4 1321.3L1193.8 1262.2" stroke="#111" stroke-width="1" shape-rendering="crispEdges"/>
<text transform="translate(1108.7 1374.8) scale(0.74 1)" font-size="28" textLength="56.8" lengthAdjust="spacingAndGlyphs" fill="#0c0c0c" stroke-width="0.6">z=18</text>
<path d="M1159.1 1363.7L1256.2 1312.1" stroke="#111" stroke-width="1" shape-rendering="crispEdges"/>
<text transform="translate(1108.7 1423.3) scale(0.74 1)" font-size="28" textLength="61.5" lengthAdjust="spacingAndGlyphs" fill="#0c0c0c" stroke-width="0.6">z=36</text>
<path d="M1166.1 1403.4L1296.7 1329" stroke="#111" stroke-width="1" shape-rendering="crispEdges"/>
<text transform="translate(1280 1423.3) scale(0.74 1)" font-size="28" textLength="56.8" lengthAdjust="spacingAndGlyphs" fill="#0c0c0c" stroke-width="0.6">z=18</text>
<path d="M1325.6 1393.7L1298.5 1249.4" stroke="#111" stroke-width="1" shape-rendering="crispEdges"/>
<text transform="translate(1095 1549.8) scale(0.74 1)" font-size="28" textLength="47.3" lengthAdjust="spacingAndGlyphs" fill="#0c0c0c" stroke-width="0.6">p=6</text>
<path d="M1135.3 1542.8L1218.1 1520.9" stroke="#111" stroke-width="1" shape-rendering="crispEdges"/>
<text transform="translate(1318.6 1550.2) scale(0.74 1)" font-size="28" textLength="61.5" lengthAdjust="spacingAndGlyphs" fill="#0c0c0c" stroke-width="0.6">z=27</text>
<path d="M1361.4 1523.9L1342.5 1325.1" stroke="#111" stroke-width="1" shape-rendering="crispEdges"/>
<text transform="translate(1420.4 1550.2) scale(0.74 1)" font-size="28" textLength="56.8" lengthAdjust="spacingAndGlyphs" fill="#0c0c0c" stroke-width="0.6">z=21</text>
<path d="M1429.6 1529L1354.5 1248.5" stroke="#111" stroke-width="1" shape-rendering="crispEdges"/>
<text transform="translate(1449.8 1482) scale(0.74 1)" font-size="28" textLength="61.5" lengthAdjust="spacingAndGlyphs" fill="#0c0c0c" stroke-width="0.6">z=26</text>
<path d="M1443.5 1439.3L1475.8 1455.4" stroke="#111" stroke-width="1" shape-rendering="crispEdges"/>
<text transform="translate(2498.2 171.3) scale(0.72 1)" font-size="37" textLength="365.3" lengthAdjust="spacingAndGlyphs" fill="#0c0c0c" stroke-width="0.7">Структурная сетка</text>
<text transform="translate(2552.6 221.7) scale(0.72 1)" font-size="37" textLength="73.6" lengthAdjust="spacingAndGlyphs" fill="#0c0c0c" stroke-width="0.7">18=3</text>
<text transform="translate(2599.3 236.7) scale(0.7 1)" font-size="16" fill="#0c0c0c" stroke-width="0.1">(1)</text>
<text transform="translate(2615 221.7) scale(0.8 1)" font-size="24" fill="#0c0c0c" stroke-width="0.5">x</text>
<text transform="translate(2627.7 221.7) scale(0.72 1)" font-size="37" fill="#0c0c0c" stroke-width="0.7">3</text>
<text transform="translate(2634.6 236.7) scale(0.7 1)" font-size="16" fill="#0c0c0c" stroke-width="0.1">(3)</text>
<text transform="translate(2653.6 221.7) scale(0.8 1)" font-size="24" fill="#0c0c0c" stroke-width="0.5">x</text>
<text transform="translate(2664.7 221.7) scale(0.72 1)" font-size="37" fill="#0c0c0c" stroke-width="0.7">2</text>
<text transform="translate(2674.4 236.7) scale(0.7 1)" font-size="16" fill="#0c0c0c" stroke-width="0.1">(9)</text>
<path d="M2465.4 296.5L2806.1 296.5" stroke="#111" stroke-width="1"/>
<path d="M2465.4 334.5L2806.1 334.5" stroke="#111" stroke-width="1"/>
<path d="M2465.4 372.5L2806.1 372.5" stroke="#111" stroke-width="1"/>
<path d="M2465.4 410.5L2806.1 410.5" stroke="#111" stroke-width="1"/>
<path d="M2465.4 447.5L2806.1 447.5" stroke="#111" stroke-width="1"/>
<path d="M2465.4 485.5L2806.1 485.5" stroke="#111" stroke-width="1"/>
<path d="M2465.4 523.5L2806.1 523.5" stroke="#111" stroke-width="1"/>
<path d="M2465.4 561.5L2806.1 561.5" stroke="#111" stroke-width="1"/>
<path d="M2465.4 598.5L2806.1 598.5" stroke="#111" stroke-width="1"/>
<path d="M2465.4 636.5L2806.1 636.5" stroke="#111" stroke-width="1"/>
<path d="M2465.4 674.5L2806.1 674.5" stroke="#111" stroke-width="1"/>
<path d="M2465.4 712.5L2806.1 712.5" stroke="#111" stroke-width="1"/>
<path d="M2465.4 749.5L2806.1 749.5" stroke="#111" stroke-width="1"/>
<path d="M2465.4 787.5L2806.1 787.5" stroke="#111" stroke-width="1"/>
<path d="M2465.4 825.5L2806.1 825.5" stroke="#111" stroke-width="1"/>
<path d="M2465.4 863.5L2806.1 863.5" stroke="#111" stroke-width="1"/>
<path d="M2465.4 900.5L2806.1 900.5" stroke="#111" stroke-width="1"/>
<path d="M2465.4 938.5L2806.1 938.5" stroke="#111" stroke-width="1"/>
<path d="M2465.5 296.8L2465.5 938.5" stroke="#111" stroke-width="1"/>
<path d="M2579.5 296.8L2579.5 938.5" stroke="#111" stroke-width="1"/>
<path d="M2692.5 296.8L2692.5 938.5" stroke="#111" stroke-width="1"/>
<path d="M2806.5 296.8L2806.5 938.5" stroke="#111" stroke-width="1"/>
<text transform="translate(2467 280.7) scale(0.78 1)" font-size="27" fill="#0c0c0c" stroke-width="0.5">I</text>
<text transform="translate(2580.8 280.7) scale(0.78 1)" font-size="27" fill="#0c0c0c" stroke-width="0.5">II</text>
<text transform="translate(2693.6 280.7) scale(0.78 1)" font-size="27" fill="#0c0c0c" stroke-width="0.5">III</text>
<text transform="translate(2808 280.7) scale(0.78 1)" font-size="27" fill="#0c0c0c" stroke-width="0.5">IV</text>
<path d="M2465.4 617.7L2579.4 579.9" stroke="#0a0a9a" stroke-width="1.8"/>
<path d="M2579.4 579.9L2692.4 466.7" stroke="#0a0a9a" stroke-width="1.8"/>
<path d="M2579.4 579.9L2692.4 579.9" stroke="#0a0a9a" stroke-width="1.8"/>
<path d="M2579.4 579.9L2692.4 693.1" stroke="#0a0a9a" stroke-width="1.8"/>
<path d="M2465.4 617.7L2579.4 617.7" stroke="#0a0a9a" stroke-width="1.8"/>
<path d="M2579.4 617.7L2692.4 504.4" stroke="#0a0a9a" stroke-width="1.8"/>
<path d="M2579.4 617.7L2692.4 617.7" stroke="#0a0a9a" stroke-width="1.8"/>
<path d="M2579.4 617.7L2692.4 730.9" stroke="#0a0a9a" stroke-width="1.8"/>
<path d="M2465.4 617.7L2579.4 655.4" stroke="#0a0a9a" stroke-width="1.8"/>
<path d="M2579.4 655.4L2692.4 542.2" stroke="#0a0a9a" stroke-width="1.8"/>
<path d="M2579.4 655.4L2692.4 655.4" stroke="#0a0a9a" stroke-width="1.8"/>
<path d="M2579.4 655.4L2692.4 768.6" stroke="#0a0a9a" stroke-width="1.8"/>
<path d="M2692.4 466.7L2806.1 296.8" stroke="#0a0a9a" stroke-width="1.8"/>
<path d="M2692.4 466.7L2806.1 636.5" stroke="#0a0a9a" stroke-width="1.8"/>
<path d="M2692.4 504.4L2806.1 334.5" stroke="#0a0a9a" stroke-width="1.8"/>
<path d="M2692.4 504.4L2806.1 674.3" stroke="#0a0a9a" stroke-width="1.8"/>
<path d="M2692.4 542.2L2806.1 372.3" stroke="#0a0a9a" stroke-width="1.8"/>
<path d="M2692.4 542.2L2806.1 712" stroke="#0a0a9a" stroke-width="1.8"/>
<path d="M2692.4 579.9L2806.1 410" stroke="#0a0a9a" stroke-width="1.8"/>
<path d="M2692.4 579.9L2806.1 749.8" stroke="#0a0a9a" stroke-width="1.8"/>
<path d="M2692.4 617.7L2806.1 447.8" stroke="#0a0a9a" stroke-width="1.8"/>
<path d="M2692.4 617.7L2806.1 787.5" stroke="#0a0a9a" stroke-width="1.8"/>
<path d="M2692.4 655.4L2806.1 485.5" stroke="#0a0a9a" stroke-width="1.8"/>
<path d="M2692.4 655.4L2806.1 825.3" stroke="#0a0a9a" stroke-width="1.8"/>
<path d="M2692.4 693.1L2806.1 523.3" stroke="#0a0a9a" stroke-width="1.8"/>
<path d="M2692.4 693.1L2806.1 863" stroke="#0a0a9a" stroke-width="1.8"/>
<path d="M2692.4 730.9L2806.1 561" stroke="#0a0a9a" stroke-width="1.8"/>
<path d="M2692.4 730.9L2806.1 900.8" stroke="#0a0a9a" stroke-width="1.8"/>
<path d="M2692.4 768.6L2806.1 598.8" stroke="#0a0a9a" stroke-width="1.8"/>
<path d="M2692.4 768.6L2806.1 938.5" stroke="#0a0a9a" stroke-width="1.8"/>
<text transform="translate(2543 1081.6) scale(0.72 1)" font-size="37" textLength="475.8" lengthAdjust="spacingAndGlyphs" fill="#0c0c0c" stroke-width="0.7">График частот вращения</text>
<text transform="translate(2315.9 1140.8) scale(0.72 1)" font-size="27" textLength="119.4" lengthAdjust="spacingAndGlyphs" fill="#0c0c0c" stroke-width="0.5">N=7,5кВт</text>
<text transform="translate(2311.4 1173.6) scale(0.72 1)" font-size="27" textLength="195.8" lengthAdjust="spacingAndGlyphs" fill="#0c0c0c" stroke-width="0.5">n=1460 об/мин</text>
<path d="M2465.4 1169.5L2919.4 1169.5" stroke="#111" stroke-width="1"/>
<path d="M2465.4 1207.5L2919.4 1207.5" stroke="#111" stroke-width="1"/>
<path d="M2465.4 1244.5L2919.4 1244.5" stroke="#111" stroke-width="1"/>
<path d="M2465.4 1282.5L2919.4 1282.5" stroke="#111" stroke-width="1"/>
<path d="M2465.4 1320.5L2919.4 1320.5" stroke="#111" stroke-width="1"/>
<path d="M2465.4 1358.5L2919.4 1358.5" stroke="#111" stroke-width="1"/>
<path d="M2465.4 1396.5L2919.4 1396.5" stroke="#111" stroke-width="1"/>
<path d="M2465.4 1433.5L2919.4 1433.5" stroke="#111" stroke-width="1"/>
<path d="M2465.4 1471.5L2919.4 1471.5" stroke="#111" stroke-width="1"/>
<path d="M2465.4 1509.5L2919.4 1509.5" stroke="#111" stroke-width="1"/>
<path d="M2465.4 1547.5L2919.4 1547.5" stroke="#111" stroke-width="1"/>
<path d="M2465.4 1584.5L2919.4 1584.5" stroke="#111" stroke-width="1"/>
<path d="M2465.4 1622.5L2919.4 1622.5" stroke="#111" stroke-width="1"/>
<path d="M2465.4 1660.5L2919.4 1660.5" stroke="#111" stroke-width="1"/>
<path d="M2465.4 1698.5L2919.4 1698.5" stroke="#111" stroke-width="1"/>
<path d="M2465.4 1736.5L2919.4 1736.5" stroke="#111" stroke-width="1"/>
<path d="M2465.4 1773.5L2919.4 1773.5" stroke="#111" stroke-width="1"/>
<path d="M2465.4 1811.5L2919.4 1811.5" stroke="#111" stroke-width="1"/>
<path d="M2465.5 1169.4L2465.5 1811.6" stroke="#111" stroke-width="1"/>
<path d="M2579.5 1169.4L2579.5 1811.6" stroke="#111" stroke-width="1"/>
<path d="M2692.5 1169.4L2692.5 1811.6" stroke="#111" stroke-width="1"/>
<path d="M2806.5 1169.4L2806.5 1811.6" stroke="#111" stroke-width="1"/>
<path d="M2919.5 1169.4L2919.5 1811.6" stroke="#111" stroke-width="1"/>
<text transform="translate(2580.3 1139.8) scale(0.78 1)" font-size="27" fill="#0c0c0c" stroke-width="0.5">I</text>
<text transform="translate(2692.9 1139.8) scale(0.78 1)" font-size="27" fill="#0c0c0c" stroke-width="0.5">II</text>
<text transform="translate(2807.2 1139.8) scale(0.78 1)" font-size="27" fill="#0c0c0c" stroke-width="0.5">III</text>
<text transform="translate(2917.6 1139.8) scale(0.78 1)" font-size="27" fill="#0c0c0c" stroke-width="0.5">IV</text>
<text transform="translate(2948.3 1139.8) scale(0.72 1)" font-size="27" textLength="109.7" lengthAdjust="spacingAndGlyphs" fill="#0c0c0c" stroke-width="0.5">ОБ/МИН</text>
<text transform="translate(2950 1168.7) scale(0.65 1)" font-size="28" fill="#0c0c0c" stroke-width="0.6">1618</text>
<text transform="translate(2950 1206.5) scale(0.65 1)" font-size="28" fill="#0c0c0c" stroke-width="0.6">1294</text>
<text transform="translate(2950 1244.3) scale(0.65 1)" font-size="28" fill="#0c0c0c" stroke-width="0.6">1011</text>
<text transform="translate(2950 1282) scale(0.65 1)" font-size="28" fill="#0c0c0c" stroke-width="0.6">802</text>
<text transform="translate(2950 1319.8) scale(0.65 1)" font-size="28" fill="#0c0c0c" stroke-width="0.6">641</text>
<text transform="translate(2950 1357.6) scale(0.65 1)" font-size="28" fill="#0c0c0c" stroke-width="0.6">501</text>
<text transform="translate(2950 1395.4) scale(0.65 1)" font-size="28" fill="#0c0c0c" stroke-width="0.6">402</text>
<text transform="translate(2950 1433.1) scale(0.65 1)" font-size="28" fill="#0c0c0c" stroke-width="0.6">321</text>
<text transform="translate(2950 1470.9) scale(0.65 1)" font-size="28" fill="#0c0c0c" stroke-width="0.6">251</text>
<text transform="translate(2950 1508.7) scale(0.65 1)" font-size="28" fill="#0c0c0c" stroke-width="0.6">202</text>
<text transform="translate(2950 1546.5) scale(0.65 1)" font-size="28" fill="#0c0c0c" stroke-width="0.6">162</text>
<text transform="translate(2950 1584.2) scale(0.65 1)" font-size="28" fill="#0c0c0c" stroke-width="0.6">126</text>
<text transform="translate(2950 1622) scale(0.65 1)" font-size="28" fill="#0c0c0c" stroke-width="0.6">100</text>
<text transform="translate(2950 1659.8) scale(0.65 1)" font-size="28" fill="#0c0c0c" stroke-width="0.6">80</text>
<text transform="translate(2950 1697.6) scale(0.65 1)" font-size="28" fill="#0c0c0c" stroke-width="0.6">63</text>
<text transform="translate(2950 1735.3) scale(0.65 1)" font-size="28" fill="#0c0c0c" stroke-width="0.6">50</text>
<text transform="translate(2950 1773.1) scale(0.65 1)" font-size="28" fill="#0c0c0c" stroke-width="0.6">40</text>
<text transform="translate(2950 1810.9) scale(0.65 1)" font-size="28" fill="#0c0c0c" stroke-width="0.6">31</text>
<path d="M2579.7 1207.2L2692.5 1320.5" stroke="#0a0a9a" stroke-width="1.8"/>
<path d="M2692.5 1320.5L2806.5 1282.7" stroke="#0a0a9a" stroke-width="1.8"/>
<path d="M2692.5 1320.5L2806.5 1396.1" stroke="#0a0a9a" stroke-width="1.8"/>
<path d="M2692.5 1320.5L2806.5 1509.4" stroke="#0a0a9a" stroke-width="1.8"/>
<path d="M2579.7 1207.2L2692.5 1358.3" stroke="#0a0a9a" stroke-width="1.8"/>
<path d="M2692.5 1358.3L2806.5 1320.5" stroke="#0a0a9a" stroke-width="1.8"/>
<path d="M2692.5 1358.3L2806.5 1433.8" stroke="#0a0a9a" stroke-width="1.8"/>
<path d="M2692.5 1358.3L2806.5 1547.2" stroke="#0a0a9a" stroke-width="1.8"/>
<path d="M2579.7 1207.2L2692.5 1396.1" stroke="#0a0a9a" stroke-width="1.8"/>
<path d="M2692.5 1396.1L2806.5 1358.3" stroke="#0a0a9a" stroke-width="1.8"/>
<path d="M2692.5 1396.1L2806.5 1471.6" stroke="#0a0a9a" stroke-width="1.8"/>
<path d="M2692.5 1396.1L2806.5 1584.9" stroke="#0a0a9a" stroke-width="1.8"/>
<path d="M2806.5 1282.7L2919.4 1169.4" stroke="#0a0a9a" stroke-width="1.8"/>
<path d="M2806.5 1282.7L2919.4 1509.4" stroke="#0a0a9a" stroke-width="1.8"/>
<path d="M2806.5 1320.5L2919.4 1207.2" stroke="#0a0a9a" stroke-width="1.8"/>
<path d="M2806.5 1320.5L2919.4 1547.2" stroke="#0a0a9a" stroke-width="1.8"/>
<path d="M2806.5 1358.3L2919.4 1245" stroke="#0a0a9a" stroke-width="1.8"/>
<path d="M2806.5 1358.3L2919.4 1584.9" stroke="#0a0a9a" stroke-width="1.8"/>
<path d="M2806.5 1396.1L2919.4 1282.7" stroke="#0a0a9a" stroke-width="1.8"/>
<path d="M2806.5 1396.1L2919.4 1622.7" stroke="#0a0a9a" stroke-width="1.8"/>
<path d="M2806.5 1433.8L2919.4 1320.5" stroke="#0a0a9a" stroke-width="1.8"/>
<path d="M2806.5 1433.8L2919.4 1660.5" stroke="#0a0a9a" stroke-width="1.8"/>
<path d="M2806.5 1471.6L2919.4 1358.3" stroke="#0a0a9a" stroke-width="1.8"/>
<path d="M2806.5 1471.6L2919.4 1698.3" stroke="#0a0a9a" stroke-width="1.8"/>
<path d="M2806.5 1509.4L2919.4 1396.1" stroke="#0a0a9a" stroke-width="1.8"/>
<path d="M2806.5 1509.4L2919.4 1736" stroke="#0a0a9a" stroke-width="1.8"/>
<path d="M2806.5 1547.2L2919.4 1433.8" stroke="#0a0a9a" stroke-width="1.8"/>
<path d="M2806.5 1547.2L2919.4 1773.8" stroke="#0a0a9a" stroke-width="1.8"/>
<path d="M2806.5 1584.9L2919.4 1471.6" stroke="#0a0a9a" stroke-width="1.8"/>
<path d="M2806.5 1584.9L2919.4 1811.6" stroke="#0a0a9a" stroke-width="1.8"/>
<path d="M2465.4 1185.7L2579.7 1207.2L2692.5 1358.3L2806.5 1433.8L2919.4 1660.5" stroke="#1a8e8e" stroke-width="4.5" stroke-linejoin="round"/>
<text transform="translate(2414 1228.6) scale(0.66 1)" font-size="28" fill="#0c0c0c" stroke-width="0.6">18</text>
<text transform="translate(2411 1262.4) scale(0.66 1)" font-size="28" fill="#0c0c0c" stroke-width="0.6">21</text>
<path d="M2401.3 1238.5L2445.5 1238.5" stroke="#111" stroke-width="1"/>
<path d="M2445.5 1238.4L2534.4 1198.3" stroke="#111" stroke-width="1" shape-rendering="crispEdges"/>
<circle cx="2534.4" cy="1198.3" r="2.2" style="fill:#111;stroke:none"/>
<text transform="translate(2414 1294.1) scale(0.66 1)" font-size="28" fill="#0c0c0c" stroke-width="0.6">20</text>
<text transform="translate(2411 1328.6) scale(0.66 1)" font-size="28" fill="#0c0c0c" stroke-width="0.6">64</text>
<path d="M2401.3 1304.5L2445.5 1304.5" stroke="#111" stroke-width="1"/>
<path d="M2445.5 1304.6L2611 1261" stroke="#111" stroke-width="1" shape-rendering="crispEdges"/>
<circle cx="2611" cy="1261" r="2.2" style="fill:#111;stroke:none"/>
<text transform="translate(2414 1360.3) scale(0.66 1)" font-size="28" fill="#0c0c0c" stroke-width="0.6">24</text>
<text transform="translate(2411 1394.1) scale(0.66 1)" font-size="28" fill="#0c0c0c" stroke-width="0.6">60</text>
<path d="M2401.3 1370.5L2445.5 1370.5" stroke="#111" stroke-width="1"/>
<path d="M2445.5 1370L2638.9 1287.1" stroke="#111" stroke-width="1" shape-rendering="crispEdges"/>
<circle cx="2638.9" cy="1287.1" r="2.2" style="fill:#111;stroke:none"/>
<text transform="translate(2414 1430.7) scale(0.66 1)" font-size="28" fill="#0c0c0c" stroke-width="0.6">28</text>
<text transform="translate(2411 1465.5) scale(0.66 1)" font-size="28" fill="#0c0c0c" stroke-width="0.6">56</text>
<path d="M2401.3 1441.5L2445.5 1441.5" stroke="#111" stroke-width="1"/>
<path d="M2445.5 1441.1L2679 1307" stroke="#111" stroke-width="1" shape-rendering="crispEdges"/>
<circle cx="2679" cy="1307" r="2.2" style="fill:#111;stroke:none"/>
<text transform="translate(2414 1498.4) scale(0.66 1)" font-size="28" fill="#0c0c0c" stroke-width="0.6">33</text>
<text transform="translate(2411 1533.2) scale(0.66 1)" font-size="28" fill="#0c0c0c" stroke-width="0.6">42</text>
<path d="M2401.3 1509.5L2445.5 1509.5" stroke="#111" stroke-width="1"/>
<path d="M2445.5 1509.5L2749.7 1415" stroke="#111" stroke-width="1" shape-rendering="crispEdges"/>
<circle cx="2749.7" cy="1415" r="2.2" style="fill:#111;stroke:none"/>
<text transform="translate(2414 1567) scale(0.66 1)" font-size="28" fill="#0c0c0c" stroke-width="0.6">18</text>
<text transform="translate(2411 1601.9) scale(0.66 1)" font-size="28" fill="#0c0c0c" stroke-width="0.6">57</text>
<path d="M2401.3 1577.5L2445.5 1577.5" stroke="#111" stroke-width="1"/>
<path d="M2445.5 1577.5L2727 1452.4" stroke="#111" stroke-width="1" shape-rendering="crispEdges"/>
<circle cx="2727" cy="1452.4" r="2.2" style="fill:#111;stroke:none"/>
<text transform="translate(2414 1642.3) scale(0.66 1)" font-size="28" fill="#0c0c0c" stroke-width="0.6">29</text>
<text transform="translate(2411 1677.8) scale(0.66 1)" font-size="28" fill="#0c0c0c" stroke-width="0.6">46</text>
<path d="M2401.3 1652.5L2445.5 1652.5" stroke="#111" stroke-width="1"/>
<path d="M2445.5 1652.8L2760.1 1440.9" stroke="#111" stroke-width="1" shape-rendering="crispEdges"/>
<circle cx="2760.1" cy="1440.9" r="2.2" style="fill:#111;stroke:none"/>
<text transform="translate(2414 1712.7) scale(0.66 1)" font-size="28" fill="#0c0c0c" stroke-width="0.6">30</text>
<text transform="translate(2411 1748.2) scale(0.66 1)" font-size="28" fill="#0c0c0c" stroke-width="0.6">60</text>
<path d="M2401.3 1723.5L2445.5 1723.5" stroke="#111" stroke-width="1"/>
<path d="M2445.5 1723.1L2824.3 1566.3" stroke="#111" stroke-width="1" shape-rendering="crispEdges"/>
<circle cx="2824.3" cy="1566.3" r="2.2" style="fill:#111;stroke:none"/>
<text transform="translate(2414 1784.1) scale(0.66 1)" font-size="28" fill="#0c0c0c" stroke-width="0.6">18</text>
<text transform="translate(2411 1819) scale(0.66 1)" font-size="28" fill="#0c0c0c" stroke-width="0.6">72</text>
<path d="M2401.3 1794.5L2445.5 1794.5" stroke="#111" stroke-width="1"/>
<path d="M2445.5 1794.6L2869.5 1712.7" stroke="#111" stroke-width="1" shape-rendering="crispEdges"/>
<circle cx="2869.5" cy="1712.7" r="2.2" style="fill:#111;stroke:none"/>
</svg>
</body></html>
